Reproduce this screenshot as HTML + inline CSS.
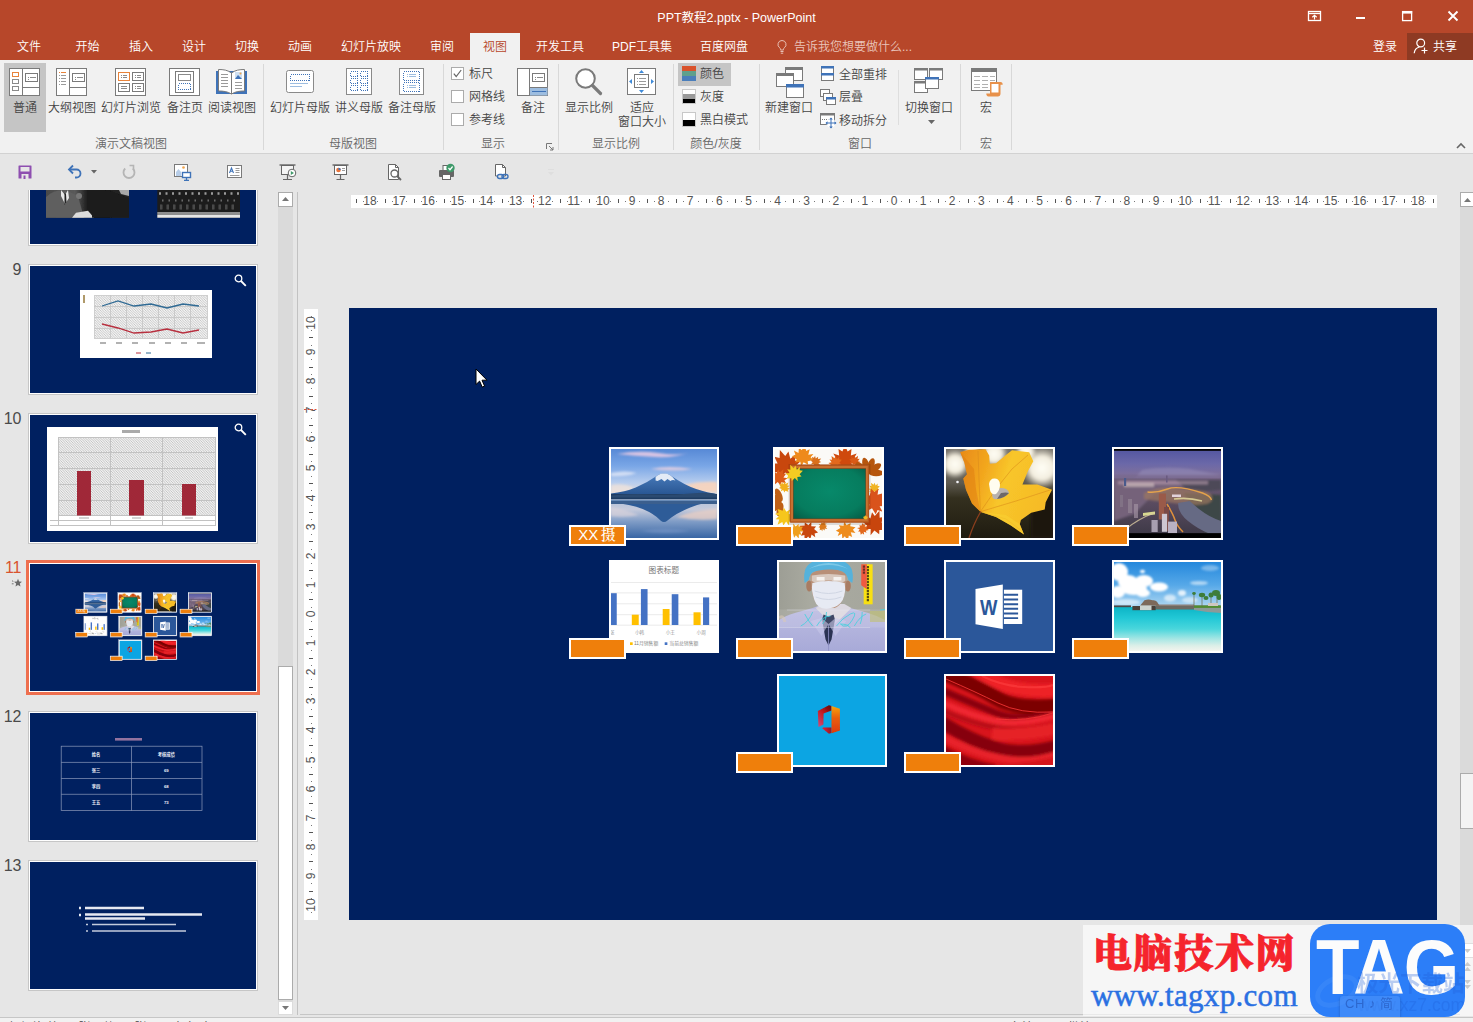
<!DOCTYPE html>
<html lang="zh-CN">
<head>
<meta charset="utf-8">
<title>PPT教程2.pptx - PowerPoint</title>
<style>
*{box-sizing:border-box;margin:0;padding:0}
html,body{width:1473px;height:1022px;overflow:hidden;background:#e6e6e6}
body{position:relative;font-family:"Liberation Sans","Noto Sans CJK SC",sans-serif;font-size:12px;color:#444;line-height:1;font-weight:350}
.abs{position:absolute}
#titlebar{position:absolute;left:0;top:0;width:1473px;height:60px;background:#b7472a}
#title{position:absolute;left:0;top:10px;width:1473px;text-align:center;color:#fff;font-size:12.500px;line-height:16px;font-weight:400}
.tab{position:absolute;top:38.500px;color:#fff;font-size:12px;line-height:16px;white-space:nowrap;transform:translateX(-50%)}
#tab-active{position:absolute;left:470px;top:33px;width:50px;height:28px;background:#f1f1f1}
.tab.act{color:#b7472a}
#ribbon{position:absolute;left:0;top:60px;width:1473px;height:94px;background:#f1f1f1;border-bottom:1px solid #d2d2d2}
.rb{position:absolute;top:101px;font-size:12px;line-height:14px;color:#444;white-space:nowrap;transform:translateX(-50%);text-align:center}
.rs{position:absolute;font-size:12px;line-height:14px;color:#444;white-space:nowrap}
.gl{position:absolute;top:137px;font-size:12px;line-height:14px;color:#666;white-space:nowrap;transform:translateX(-50%)}
.sep{position:absolute;top:64px;width:1px;height:86px;background:#d8d8d8}
.ico{position:absolute;overflow:visible}
#qat{position:absolute;left:0;top:155px;width:1473px;height:34px;background:#e6e6e6}

#hruler{position:absolute;left:351px;top:195px;width:1086px;height:13px;background:#fff;overflow:hidden}
.rn{position:absolute;top:-1px;font-size:12px;line-height:14px;color:#555;transform:translateX(-50%);font-family:"Liberation Sans",sans-serif}
#vruler{position:absolute;left:304px;top:309px;width:14px;height:611px;background:#fff;overflow:hidden}
.vn{position:absolute;left:7px;font-size:12px;line-height:14px;color:#555;transform:translate(-50%,-50%) rotate(-90deg);font-family:"Liberation Sans",sans-serif}
#slide{position:absolute;left:349px;top:308px;width:1088px;height:612px;background:#002060;overflow:hidden}
.pic{position:absolute;height:93px;border:2px solid #fff;background:#fff;overflow:hidden}
.pic svg{display:block}
.lab{position:absolute;width:57px;height:21px;border:2px solid #fff;background:#ef7f0b;color:#fff;font-size:15px;line-height:15.500px;text-align:center;white-space:nowrap;font-weight:500;font-family:"Liberation Sans","Noto Serif CJK SC",serif;word-spacing:-1.500px;text-indent:-1px}
#thumbs{position:absolute;left:0;top:190px;width:277px;height:826px;overflow:hidden}
#thumbs>*{margin-top:-190px}
.th{position:absolute;left:28px;width:230px;height:131px;border:1px solid #c6c6c6;background:#fff}
.ti{position:absolute;left:1px;top:1px;width:226px;height:127px;background:#002060;overflow:hidden}
.tn{position:absolute;left:0;width:21.500px;text-align:right;font-size:16px;line-height:16px;color:#4a4a4a;font-family:"Liberation Sans",sans-serif}
.tn.sel{color:#d9532f}
.mini{position:absolute;left:0;top:0;width:1088px;height:612px;transform:scale(.2077);transform-origin:0 0}
.mini .pic{outline:2.500px solid #fff}.mini .lab{outline:2px solid #fff}
</style>
</head>
<body>
<div id="titlebar">
<div id="title">PPT教程2.pptx - PowerPoint</div>
<svg class="ico" style="left:1306px;top:9px" width="18" height="14" viewBox="0 0 18 14"><rect x="2.5" y="2.5" width="12" height="9" fill="none" stroke="#fff" stroke-width="1.3"/><path d="M2.5 4.5h12" stroke="#fff" stroke-width="1.3"/><path d="M8.5 10.5V6.5M6.3 8.2l2.2-2 2.2 2" fill="none" stroke="#fff" stroke-width="1.2"/></svg>
<div class="abs" style="left:1356px;top:17px;width:9px;height:2px;background:#fff"></div>
<svg class="ico" style="left:1400px;top:9px" width="14" height="14" viewBox="0 0 14 14"><rect x="2.6" y="2.6" width="9" height="9" fill="none" stroke="#fff" stroke-width="1.3"/><rect x="2" y="2" width="10.2" height="2.6" fill="#fff"/></svg>
<svg class="ico" style="left:1446px;top:9px" width="14" height="14" viewBox="0 0 14 14"><path d="M2.5 2.5l9 9M11.500 2.500l-9 9" stroke="#fff" stroke-width="1.9"/></svg>
<div id="tab-active"></div>
<span class="tab" style="left:29px">文件</span>
<span class="tab" style="left:87.500px">开始</span>
<span class="tab" style="left:141px">插入</span>
<span class="tab" style="left:194px">设计</span>
<span class="tab" style="left:247px">切换</span>
<span class="tab" style="left:300px">动画</span>
<span class="tab" style="left:371px">幻灯片放映</span>
<span class="tab" style="left:442px">审阅</span>
<span class="tab act" style="left:495px">视图</span>
<span class="tab" style="left:560px">开发工具</span>
<span class="tab" style="left:642px">PDF工具集</span>
<span class="tab" style="left:724px">百度网盘</span>
<svg class="ico" style="left:776px;top:39px" width="12" height="16" viewBox="0 0 12 16"><path d="M6 1.500a4 4 0 0 0-2.300 7.300c.5.500.8 1 .8 1.700v.5h3v-.5c0-.7.300-1.200.8-1.700A4 4 0 0 0 6 1.500z" fill="none" stroke="#e8c1b6" stroke-width="1"/><path d="M4.500 12.500h3M4.800 14.200h2.400" stroke="#e8c1b6" stroke-width="1"/></svg>
<span class="tab" style="left:794px;transform:none;color:#e9c4ba">告诉我您想要做什么...</span>
<span class="tab" style="left:1385px">登录</span>
<div class="abs" style="left:1407px;top:33px;width:66px;height:27px;background:#8e3a23"></div>
<svg class="ico" style="left:1412px;top:37px" width="18" height="18" viewBox="0 0 18 18"><circle cx="8.700" cy="6" r="3.900" fill="none" stroke="#fff" stroke-width="1.200"/><path d="M2.200 16.300c.3-3.300 2.500-5.600 5.200-6.300" fill="none" stroke="#fff" stroke-width="1.200"/><path d="M12.500 10.500v6M9.500 13.500h6" stroke="#fff" stroke-width="1.200"/></svg>
<span class="tab" style="left:1445px">共享</span>
</div>

<div id="ribbon"></div>
<div class="abs" style="left:4px;top:63px;width:42px;height:69px;background:#c5c5c5"></div>
<!-- group 1 icons -->
<svg class="ico" style="left:9px;top:68px" width="32" height="28" viewBox="0 0 32 28"><rect x=".5" y=".5" width="30" height="27" fill="#fff" stroke="#7a7a7a"/><path d="M13.500 .5v27M13.500 19.500h17" stroke="#7a7a7a" fill="none"/><rect x="3.500" y="4.500" width="6" height="4" fill="#fff" stroke="#e8833a"/><rect x="3.500" y="11.500" width="6" height="4" fill="#fff" stroke="#8a8a8a"/><rect x="3.500" y="18.500" width="6" height="4" fill="#fff" stroke="#8a8a8a"/><rect x="16.500" y="5.500" width="12" height="8" fill="#fff" stroke="#7a7a7a"/><path d="M19 9.500h1M21 9.500h6M19 11.500h1" stroke="#8a8a8a"/></svg>
<svg class="ico" style="left:56px;top:68px" width="32" height="28" viewBox="0 0 32 28"><rect x=".5" y=".5" width="30" height="27" fill="#fff" stroke="#7a7a7a"/><path d="M13.500 .5v27M13.500 19.500h17" stroke="#7a7a7a" fill="none"/><path d="M3 4.500h1M5 4.500h5" stroke="#e8833a"/><path d="M3 7.500h1M5 7.500h5M3 10.500h1M5 10.500h5M3 13.500h1M5 13.500h5M3 16.500h1M5 16.500h5" stroke="#9a9a9a"/><rect x="16.500" y="5.500" width="12" height="8" fill="#fff" stroke="#7a7a7a"/><path d="M19 9.500h1M21 9.500h6M19 11.500h1" stroke="#8a8a8a"/></svg>
<svg class="ico" style="left:115px;top:68px" width="32" height="28" viewBox="0 0 32 28"><rect x=".5" y=".5" width="30" height="27" fill="#fff" stroke="#7a7a7a"/><rect x="3.500" y="4.500" width="11" height="8" fill="#fff" stroke="#e8833a"/><rect x="17.500" y="4.500" width="11" height="8" fill="#fff" stroke="#7a7a7a"/><rect x="3.500" y="15.500" width="11" height="8" fill="#fff" stroke="#7a7a7a"/><rect x="17.500" y="15.500" width="11" height="8" fill="#fff" stroke="#7a7a7a"/><path d="M6 7.500h1M8 7.500h4M6 9.500h1M8 9.500h4M20 7.500h1M22 7.500h4M20 9.500h1M22 9.500h4M6 18.500h6M6 20.500h6M20 18.500h1M22 18.500h4M20 20.500h1M22 20.500h4" stroke="#8a8a8a"/></svg>
<svg class="ico" style="left:169px;top:68px" width="32" height="28" viewBox="0 0 32 28"><rect x=".5" y=".5" width="30" height="27" fill="#fff" stroke="#7a7a7a"/><rect x="6.500" y="3.500" width="18" height="21" fill="#fff" stroke="#7a7a7a"/><rect x="9.500" y="6.500" width="12" height="6" fill="#fff" stroke="#8a8a8a"/><rect x="9.500" y="15.500" width="12" height="6" fill="none" stroke="#3f73b8" stroke-dasharray="1 1" shape-rendering="crispEdges"/></svg>
<svg class="ico" style="left:216px;top:68px" width="32" height="28" viewBox="0 0 32 28"><path d="M0 3h31v23H0z" fill="#3f73b8"/><path d="M2.500 1.500c5 0 9 .5 13 3.500v21c-4-2.500-8-3-13-3z" fill="#fff" stroke="#7a7a7a"/><path d="M28.500 1.500c-5 0-9 .5-13 3.500v21c4-2.500 8-3 13-3z" fill="#fff" stroke="#7a7a7a"/><path d="M5 6.500h7M5 9.500h7M5 12.500h7M5 15.500h7M5 18.500h7M19 14.500h7M19 17.500h7M19 20.500h7" stroke="#9a9a9a"/><rect x="19" y="4" width="7" height="7" fill="#cfe0f2"/><path d="M19 11l3-4 4 4z" fill="#3f73b8"/><circle cx="24.500" cy="5.500" r="1" fill="#f0a34a"/></svg>
<span class="rb" style="left:25px">普通</span>
<span class="rb" style="left:72px">大纲视图</span>
<span class="rb" style="left:131px">幻灯片浏览</span>
<span class="rb" style="left:185px">备注页</span>
<span class="rb" style="left:232px">阅读视图</span>
<span class="gl" style="left:131px">演示文稿视图</span>
<div class="sep" style="left:263px"></div>
<!-- group 2 -->
<svg class="ico" style="left:286px;top:70px" width="28" height="23" viewBox="0 0 28 23"><rect x=".5" y=".5" width="27" height="22" rx="2" fill="#fff" stroke="#8a8a8a"/><rect x="4.500" y="4.500" width="19" height="6" fill="none" stroke="#3f73b8" stroke-dasharray="1 1" shape-rendering="crispEdges"/><path d="M4 13.500h18M4 16.500h12" stroke="#9dbde0"/></svg>
<svg class="ico" style="left:346px;top:68px" width="27" height="27" viewBox="0 0 27 27"><rect x=".5" y=".5" width="25" height="26" fill="#fff" stroke="#8a8a8a"/><g fill="none" stroke="#3f73b8" stroke-dasharray="1 1" shape-rendering="crispEdges"><rect x="4.500" y="3.500" width="7" height="5"/><rect x="14.500" y="3.500" width="7" height="5"/><rect x="4.500" y="10.500" width="7" height="5"/><rect x="14.500" y="10.500" width="7" height="5"/><rect x="4.500" y="17.500" width="7" height="5"/><rect x="14.500" y="17.500" width="7" height="5"/></g></svg>
<svg class="ico" style="left:399px;top:68px" width="26" height="27" viewBox="0 0 26 27"><rect x=".5" y=".5" width="24" height="26" fill="#fff" stroke="#8a8a8a"/><g fill="none" stroke="#3f73b8" stroke-dasharray="1 1" shape-rendering="crispEdges"><rect x="4.500" y="3.500" width="16" height="9"/><rect x="4.500" y="14.500" width="16" height="9"/></g><path d="M8 6.500h1M10 6.500h7M8 8.500h1M10 8.500h7M8 17.500h1M10 17.500h7M8 19.500h1M10 19.500h7" stroke="#9dbde0"/></svg>
<span class="rb" style="left:300px">幻灯片母版</span>
<span class="rb" style="left:359px">讲义母版</span>
<span class="rb" style="left:412px">备注母版</span>
<span class="gl" style="left:353px">母版视图</span>
<div class="sep" style="left:443px"></div>
<!-- group 3 -->
<div class="abs" style="left:451px;top:67px;width:13px;height:13px;background:#fff;border:1px solid #ababab"></div>
<svg class="ico" style="left:451px;top:67px" width="13" height="13" viewBox="0 0 13 13"><path d="M2.800 6.700l2.400 2.800 5-6.500" fill="none" stroke="#666" stroke-width="1.200"/></svg>
<div class="abs" style="left:451px;top:90px;width:13px;height:13px;background:#fff;border:1px solid #ababab"></div>
<div class="abs" style="left:451px;top:113px;width:13px;height:13px;background:#fff;border:1px solid #ababab"></div>
<span class="rs" style="left:469px;top:67px">标尺</span>
<span class="rs" style="left:469px;top:90px">网格线</span>
<span class="rs" style="left:469px;top:113px">参考线</span>
<svg class="ico" style="left:517px;top:68px" width="32" height="28" viewBox="0 0 32 28"><rect x=".5" y=".5" width="30" height="27" fill="#fff" stroke="#7a7a7a"/><path d="M12.500 .5v27" stroke="#7a7a7a"/><rect x="13" y="19" width="17.500" height="8.500" fill="#9dbde0"/><path d="M12.500 19.500h18" stroke="#7a7a7a"/><path d="M15 23.500h14" stroke="#3f73b8"/><rect x="15.500" y="5.500" width="12" height="8" fill="#fff" stroke="#7a7a7a"/><path d="M18 9.500h1M20 9.500h6M18 11.500h1" stroke="#8a8a8a"/></svg>
<span class="rb" style="left:533px">备注</span>
<span class="gl" style="left:493px">显示</span>
<svg class="ico" style="left:546px;top:143px" width="8" height="8" viewBox="0 0 8 8"><path d="M.5 6V.5H6" fill="none" stroke="#777"/><path d="M3 3l4 4M7 4v3H4" fill="none" stroke="#777"/></svg>
<div class="sep" style="left:558px"></div>
<!-- group 4 -->
<svg class="ico" style="left:572px;top:66px" width="32" height="32" viewBox="0 0 32 32"><circle cx="13.500" cy="12.500" r="9.300" fill="#fff" stroke="#7a7a7a" stroke-width="2"/><path d="M20.500 19.500l8 8" stroke="#7a7a7a" stroke-width="3.200" stroke-linecap="round"/></svg>
<svg class="ico" style="left:627px;top:68px" width="30" height="27" viewBox="0 0 30 27"><rect x=".5" y=".5" width="28" height="26" fill="#fff" stroke="#7a7a7a"/><rect x="7.500" y="6.500" width="14" height="13" fill="#fff" stroke="#7a7a7a"/><path d="M10 10.500h1M12 10.500h7M10 13.500h1M12 13.500h7M10 16.500h1M12 16.500h7" stroke="#9a9a9a"/><path d="M14.500 2l2.500 3h-5zM14.500 25l2.500-3h-5zM2 13.500l3-2.500v5zM27 13.500l-3-2.500v5z" fill="#3f8ad8"/></svg>
<span class="rb" style="left:589px">显示比例</span>
<span class="rb" style="left:642px">适应<br>窗口大小</span>
<span class="gl" style="left:616px">显示比例</span>
<div class="sep" style="left:673px"></div>
<!-- group 5 -->
<div class="abs" style="left:678px;top:63px;width:53px;height:23px;background:#c5c5c5"></div>
<svg class="ico" style="left:682px;top:66px" width="14" height="15" viewBox="0 0 14 15"><rect width="14" height="5" fill="#d9532c"/><rect y="5" width="14" height="5" fill="#5fa08c"/><rect y="10" width="14" height="5" fill="#4a7ebb"/></svg>
<svg class="ico" style="left:682px;top:89px" width="14" height="15" viewBox="0 0 14 15"><rect width="14" height="5" fill="#fff"/><rect y="5" width="14" height="5" fill="#9a9a9a"/><rect y="10" width="14" height="5" fill="#000"/><rect x=".5" y=".5" width="13" height="14" fill="none" stroke="#c8c8c8"/></svg>
<svg class="ico" style="left:682px;top:112px" width="14" height="15" viewBox="0 0 14 15"><rect width="14" height="8" fill="#fff"/><rect y="8" width="14" height="7" fill="#000"/><rect x=".5" y=".5" width="13" height="14" fill="none" stroke="#c8c8c8"/></svg>
<span class="rs" style="left:700px;top:67px">颜色</span>
<span class="rs" style="left:700px;top:90px">灰度</span>
<span class="rs" style="left:700px;top:113px">黑白模式</span>
<span class="gl" style="left:716px">颜色/灰度</span>
<div class="sep" style="left:759px"></div>
<!-- group 6 -->
<svg class="ico" style="left:776px;top:67px" width="28" height="31" viewBox="0 0 28 31"><rect x="9.500" y=".5" width="17" height="13" fill="#fff" stroke="#7a7a7a"/><rect x="9" y="0" width="18" height="3" fill="#7a7a7a"/><rect x=".5" y="6.500" width="17" height="13" fill="#fff" stroke="#7a7a7a"/><rect x="0" y="6" width="18" height="3" fill="#7a7a7a"/><rect x="10.500" y="17.500" width="17" height="13" fill="#fff" stroke="#7a7a7a"/><rect x="10" y="17" width="18" height="3.500" fill="#3f73b8"/></svg>
<span class="rb" style="left:789px">新建窗口</span>
<svg class="ico" style="left:821px;top:66px" width="14" height="15" viewBox="0 0 14 15"><rect x=".5" y=".5" width="12" height="14" fill="#fff" stroke="#7a7a7a"/><rect x="0" y="0" width="13" height="2.500" fill="#3f73b8"/><rect x="0" y="7" width="13" height="2.500" fill="#3f73b8"/></svg>
<svg class="ico" style="left:820px;top:89px" width="17" height="16" viewBox="0 0 17 16"><rect x=".5" y=".5" width="9" height="7" fill="#fff" stroke="#7a7a7a"/><rect x="3.500" y="4.500" width="9" height="7" fill="#fff" stroke="#7a7a7a"/><rect x="6.500" y="8.500" width="9" height="7" fill="#fff" stroke="#7a7a7a"/><rect x="6" y="8" width="10" height="2.500" fill="#3f73b8"/></svg>
<svg class="ico" style="left:820px;top:113px" width="17" height="16" viewBox="0 0 17 16"><rect x=".5" y=".5" width="14" height="11" fill="#fff" stroke="#7a7a7a"/><rect x="0" y="0" width="15" height="2.500" fill="#7a7a7a"/><path d="M2 6.500h8" stroke="#7a7a7a" stroke-dasharray="1 1" shape-rendering="crispEdges"/><circle cx="11" cy="10" r="4.500" fill="#fff"/><path d="M11 5v10M6 10h10" stroke="#3f73b8" stroke-width="1"/><path d="M11 4.500l1.800 2h-3.600zM11 15.500l1.800-2h-3.600zM5.500 10l2-1.800v3.600zM16.500 10l-2-1.800v3.600z" fill="#3f73b8"/></svg>
<span class="rs" style="left:839px;top:68px">全部重排</span>
<span class="rs" style="left:839px;top:90px">层叠</span>
<span class="rs" style="left:839px;top:114px">移动拆分</span>
<div class="abs" style="left:898px;top:70px;width:1px;height:55px;background:#dedede"></div>
<svg class="ico" style="left:914px;top:68px" width="30" height="26" viewBox="0 0 30 26"><rect x=".5" y=".5" width="13" height="11" fill="#fff" stroke="#7a7a7a"/><rect x="0" y="0" width="14" height="2.500" fill="#7a7a7a"/><rect x="15.500" y=".5" width="13" height="11" fill="#fff" stroke="#7a7a7a"/><rect x="15" y="0" width="14" height="2.500" fill="#7a7a7a"/><rect x=".5" y="13.500" width="13" height="11" fill="#fff" stroke="#7a7a7a"/><rect x="0" y="13" width="14" height="2.500" fill="#7a7a7a"/><rect x="11.500" y="9.500" width="13" height="11" fill="#fff" stroke="#7a7a7a"/><rect x="11" y="9" width="14" height="2.500" fill="#3f73b8"/></svg>
<span class="rb" style="left:929px">切换窗口</span>
<svg class="ico" style="left:928px;top:120px" width="7" height="4" viewBox="0 0 7 4"><path d="M0 0h7L3.500 4z" fill="#666"/></svg>
<span class="gl" style="left:860px">窗口</span>
<div class="sep" style="left:960px"></div>
<!-- group 7 -->
<svg class="ico" style="left:971px;top:68px" width="32" height="29" viewBox="0 0 32 29"><rect x=".5" y=".5" width="25" height="22" fill="#fff" stroke="#7a7a7a"/><rect x="0" y="0" width="26" height="4" fill="#7a7a7a"/><path d="M3 8.500h6M11 8.500h6M19 8.500h5M3 12.500h6M11 12.500h6M19 12.500h5M3 16.500h6M11 16.500h6M3 19.500h6M11 19.500h6" stroke="#b0b0b0"/><path d="M19 14h10.500c1.500 0 2.200 1 2.200 2.800h-2.200v9c0 1.600-1 2.600-2.600 2.600h-9.400c-1.500 0-2.200-1.300-2.200-2.900h3.700z" fill="#e8914a"/><path d="M20.500 16h7v8.500h-7z" fill="#fff"/></svg>
<span class="rb" style="left:986px">宏</span>
<span class="gl" style="left:986px">宏</span>
<div class="sep" style="left:1011px"></div>
<svg class="ico" style="left:1456px;top:142px" width="10" height="7" viewBox="0 0 10 7"><path d="M1 6l4-4 4 4" fill="none" stroke="#666" stroke-width="1.600"/></svg>

<div id="qat"></div>
<svg class="ico" style="left:18px;top:165px" width="14" height="14" viewBox="0 0 14 14"><path d="M1 .5h12a.5.5 0 0 1 .5.5v12a.5.5 0 0 1-.5.500H1a.5.5 0 0 1-.5-.5V1A.5.5 0 0 1 1 .5z" fill="#8e4fb0"/><rect x="2.500" y="2" width="9" height="4.500" fill="#e6e6e6"/><rect x="3.500" y="9" width="7" height="5" fill="#e6e6e6"/><rect x="5.500" y="10.500" width="2" height="3.500" fill="#8e4fb0"/></svg>
<svg class="ico" style="left:67px;top:164px" width="16" height="16" viewBox="0 0 16 16"><path d="M2 5.500h7.500a4 4 0 0 1 0 8H8" fill="none" stroke="#3f73b8" stroke-width="1.800"/><path d="M6 1.500L2 5.500l4 4" fill="none" stroke="#3f73b8" stroke-width="1.800"/></svg>
<svg class="ico" style="left:91px;top:170px" width="6" height="4" viewBox="0 0 6 4"><path d="M0 0h6L3 3.500z" fill="#666"/></svg>
<svg class="ico" style="left:121px;top:164px" width="16" height="16" viewBox="0 0 16 16"><path d="M11.800 4.500A5.500 5.500 0 1 1 4.200 4.500" fill="none" stroke="#b5b5b5" stroke-width="1.800"/><path d="M8.500 1.500h4v4" fill="none" stroke="#b5b5b5" stroke-width="1.600"/></svg>
<svg class="ico" style="left:174px;top:164px" width="17" height="17" viewBox="0 0 17 17"><rect x=".5" y=".5" width="13" height="12" fill="#fff" stroke="#7a7a7a"/><circle cx="9.500" cy="3.500" r="1.300" fill="#f0a34a"/><path d="M2 12V8l2.500-3 2.500 3v4z" fill="#b7cde8"/><rect x="8.500" y="8.500" width="8" height="5" fill="#fff" stroke="#3f73b8" stroke-width="1.400"/><path d="M12.500 14v2M10 16.300h5" stroke="#3f73b8" stroke-width="1.300"/></svg>
<svg class="ico" style="left:227px;top:165px" width="16" height="14" viewBox="0 0 16 14"><rect x=".5" y=".5" width="14" height="12" fill="#fff" stroke="#7a7a7a"/><path d="M2.500 8l2-5 2 5M3.300 6.300h2.400" fill="none" stroke="#3f73b8" stroke-width="1.100"/><path d="M8.500 3.500h4M8.500 5.500h4M8.500 7.500h4M3 10.500h9.500" stroke="#9a9a9a"/></svg>
<svg class="ico" style="left:279px;top:164px" width="19" height="17" viewBox="0 0 19 17"><path d="M.5 1h16" stroke="#666" stroke-width="1.400"/><rect x="2.500" y="1.500" width="12" height="9" fill="#f5f5f5" stroke="#666"/><path d="M8.500 11v4M4 15.500h9" stroke="#666" stroke-width="1.200"/><circle cx="13" cy="9" r="3.800" fill="#fff" stroke="#666"/><path d="M11.800 7l3.200 2-3.200 2z" fill="#3f9a6a"/></svg>
<svg class="ico" style="left:332px;top:164px" width="18" height="17" viewBox="0 0 18 17"><path d="M.5 1h16" stroke="#666" stroke-width="1.400"/><rect x="2.500" y="1.500" width="12" height="9" fill="#fff" stroke="#666"/><path d="M8.500 11v4M4.500 15.500h8" stroke="#666" stroke-width="1.200"/><circle cx="6.500" cy="6" r="2.300" fill="#e8733a"/><path d="M6.500 6V3.700A2.300 2.300 0 0 1 8.800 6z" fill="#3f73b8"/><path d="M10 4.500h3M10 6.500h3" stroke="#9a9a9a"/></svg>
<svg class="ico" style="left:387px;top:164px" width="17" height="17" viewBox="0 0 17 17"><path d="M1.500 .5h7l3 3v12h-10z" fill="#fff" stroke="#666"/><path d="M8.500 .5v3h3" fill="none" stroke="#666"/><circle cx="7.500" cy="9.500" r="3.500" fill="#fff" stroke="#666" stroke-width="1.300"/><path d="M10 12l4 4" stroke="#666" stroke-width="1.800"/></svg>
<svg class="ico" style="left:438px;top:163px" width="18" height="18" viewBox="0 0 18 18"><rect x="5" y="2.500" width="7" height="5" fill="#fff" stroke="#666"/><rect x="1" y="7" width="15" height="7" rx="1" fill="#666"/><rect x="4.500" y="11.500" width="8" height="5" fill="#fff" stroke="#666"/><circle cx="12.500" cy="5" r="4.200" fill="#3f9a6a"/><path d="M10.500 5l1.500 1.700 2.600-3.200" fill="none" stroke="#fff" stroke-width="1.200"/></svg>
<svg class="ico" style="left:494px;top:164px" width="16" height="18" viewBox="0 0 16 18"><path d="M1.500 .5h7l3 3v8.500h-10z" fill="#fff" stroke="#666"/><path d="M8.500 .5v3h3" fill="none" stroke="#666"/><rect x="3.500" y="10.500" width="6" height="4" rx="2" fill="#e6e6e6" stroke="#3f73b8" stroke-width="1.400"/><rect x="8" y="10.500" width="6" height="4" rx="2" fill="none" stroke="#3f73b8" stroke-width="1.400"/></svg>
<svg class="ico" style="left:547px;top:169px" width="8" height="8" viewBox="0 0 8 8"><path d="M1 .5h6" stroke="#dedede"/><path d="M1 3h6L4 6.500z" fill="#dedede"/></svg>

<div id="thumbs">
<div class="th" style="top:115px"><div class="ti"><svg class="ico" style="left:16px;top:0" width="200" height="127" viewBox="0 0 200 127"><defs><linearGradient id="bw1" x1="0" y1="0" x2="1" y2="0"><stop offset="0" stop-color="#4a4a4a"/><stop offset=".35" stop-color="#5a5a5a"/><stop offset=".5" stop-color="#1c1c1c"/><stop offset="1" stop-color="#262626"/></linearGradient><filter id="bl8" x="-5%" y="-5%" width="110%" height="110%"><feGaussianBlur stdDeviation=".5"/></filter></defs>
<g filter="url(#bl8)"><rect x="0" y="60" width="83" height="40.700" fill="url(#bw1)"/><path d="M0 100.700V80q8-8 20-7l12 6 6 21.700z" fill="#5e5e5e"/><path d="M15 73l4 5 3-5 1 8-4 6-4-8z" fill="#e8e8e8"/><path d="M18.500 76l1.500 1 .5 8-2 3z" fill="#222"/><circle cx="20" cy="67" r="6" fill="#8a8a8a"/><circle cx="33" cy="79" r="3" fill="#777"/><path d="M26 100.700l4-5 12-2 6 7z" fill="#dcdcdc"/><path d="M46 100.700V82q6-10 16-9l21 8v19.700z" fill="#1a1a1a"/><circle cx="66" cy="67" r="6" fill="#777"/><path d="M73 73h10v6l-8-2z" fill="#a8a8a8"/>
<rect x="111.300" y="60" width="82.700" height="40.700" fill="#1e1e1e"/><path d="M113 76.500h80" stroke="#9a9a9a" stroke-width="2.600" stroke-dasharray="2 4.500"/><path d="M116 83.500h76" stroke="#6a6a6a" stroke-width="2" stroke-dasharray="1.500 5"/><path d="M114 90h78" stroke="#4a4a4a" stroke-width="5" stroke-dasharray="2.500 4"/><path d="M111.300 95h82.700v3h-82.700z" fill="#8e8e8e"/><path d="M111.300 98h82.700v2.700h-82.700z" fill="#e6e6e6"/></g></svg></div></div>
<div class="th" style="top:264px"><div class="ti"><svg class="ico" style="left:50px;top:24px" width="132" height="68" viewBox="0 0 132 68"><defs><pattern id="h9" width="2.500" height="2.500" patternUnits="userSpaceOnUse"><rect width="2.500" height="2.500" fill="#f4f4f4"/><path d="M-.5 -.5l3.500 3.500" stroke="#b4b4b4" stroke-width=".7"/></pattern></defs><rect width="132" height="68" fill="#fff"/><rect x="14.500" y="5.500" width="113" height="43" fill="url(#h9)" stroke="#cfcfcf"/><path d="M14 16.500h113M14 27.500h113M14 38.500h113M30.500 5v43M46.500 5v43M62.500 5v43M78.500 5v43M94.500 5v43M110.500 5v43" stroke="#c4c4c4" stroke-width=".8"/><path d="M22 16l16-5 16 5 17-2 16 4 16-4 16 2" fill="none" stroke="#2f6a94" stroke-width="1.300"/><path d="M22 34l16 4 16 5 17-1 16-3 16 4 16-3" fill="none" stroke="#b8303f" stroke-width="1.300"/><path d="M20 53h6M36 53h6M52 53h6M69 53h6M85 53h6M101 53h6M117 53h8" stroke="#999" stroke-width="1.500"/><path d="M56 63h5" stroke="#b8303f" stroke-width="1"/><path d="M66 63h5" stroke="#2f6a94" stroke-width="1"/><path d="M4 5v8" stroke="#b09a6a" stroke-width="2"/></svg></div></div><span class="tn" style="top:262px">9</span><svg class="ico" style="left:234px;top:274px" width="13" height="13" viewBox="0 0 13 13"><circle cx="4.500" cy="4.500" r="3.300" fill="none" stroke="#fff" stroke-width="1.300"/><path d="M7 7l4.800 4.800" stroke="#fff" stroke-width="1.800"/></svg>
<div class="th" style="top:413px"><div class="ti"><svg class="ico" style="left:17px;top:12px" width="171" height="104" viewBox="0 0 171 104"><defs><pattern id="h10" width="2.500" height="2.500" patternUnits="userSpaceOnUse"><rect width="2.500" height="2.500" fill="#f2f2f2"/><path d="M-.5 -.5l3.500 3.500" stroke="#b0b0b0" stroke-width=".7"/></pattern></defs><rect width="171" height="104" fill="#fff"/><rect x="11" y="10" width="158" height="78" fill="url(#h10)"/><path d="M11 10.500h158M11 25.500h158M11 41.500h158M11 57.500h158M11 73.500h158M11 88.500h158M11.500 10v88M63.500 10v88M115.500 10v88M168.500 10v88M3 93.500h166M3 98.500h166" stroke="#c2c2c2" stroke-width="1"/><rect x="30" y="44" width="14" height="44.500" fill="#a02838"/><rect x="82" y="53" width="15" height="35.500" fill="#a02838"/><rect x="135" y="57" width="14" height="31.500" fill="#a02838"/><path d="M75 4.500h18" stroke="#aaa" stroke-width="3"/><path d="M32 91h10M85 91h9M138 91h8" stroke="#aaa" stroke-width="1.200"/></svg></div></div><span class="tn" style="top:411px">10</span><svg class="ico" style="left:234px;top:423px" width="13" height="13" viewBox="0 0 13 13"><circle cx="4.500" cy="4.500" r="3.300" fill="none" stroke="#fff" stroke-width="1.300"/><path d="M7 7l4.800 4.800" stroke="#fff" stroke-width="1.800"/></svg>
<div class="abs" style="left:26px;top:560px;width:234px;height:135px;background:#ee6f4f"></div><div class="th" style="top:562px;border-color:#ee6f4f"><div class="ti"><div class="mini"><div class="pic" style="left:260px;top:139px;width:110px"><svg width="106" height="89" viewBox="0 0 107 89" preserveAspectRatio="none"><defs><linearGradient id="msky1" x1="0" y1="0" x2="0" y2="1"><stop offset="0" stop-color="#5789d6"/><stop offset=".35" stop-color="#79a6e6"/><stop offset=".7" stop-color="#b7cdee"/><stop offset="1" stop-color="#f1e2d6"/></linearGradient>
<linearGradient id="mwat1" x1="0" y1="0" x2="0" y2="1"><stop offset="0" stop-color="#aebfd8"/><stop offset=".3" stop-color="#c6cbdc"/><stop offset=".6" stop-color="#7f9cc6"/><stop offset="1" stop-color="#3966a4"/></linearGradient>
<linearGradient id="mmt1" x1="0" y1="0" x2="0" y2="1"><stop offset="0" stop-color="#4a7cbc"/><stop offset="1" stop-color="#23508c"/></linearGradient>
<filter id="mb1" x="-10%" y="-10%" width="120%" height="120%"><feGaussianBlur stdDeviation="1.200"/></filter><filter id="mb1s" x="-10%" y="-10%" width="120%" height="120%"><feGaussianBlur stdDeviation=".5"/></filter></defs>
<rect width="107" height="48" fill="url(#msky1)"/>
<g filter="url(#mb1)"><path d="M6 5q22-4 42-1t30 0q-14 5-34 4T6 5z" fill="#e3c9e4" opacity=".9"/><path d="M40 20q18-4 42 0q-18 3-42 0z" fill="#ecd2e0" opacity=".8"/><path d="M0 24q14-3 26 0-12 4-26 3z" fill="#dfe6f6" opacity=".8"/><path d="M74 36q16-4 33-3v10H74z" fill="#f8d4bc" opacity=".9"/><path d="M0 36q12-2 22 2v6H0z" fill="#f3e4da" opacity=".7"/></g>
<path d="M0 44.500Q14 43 25 38.500T46 27q3-2.500 6-2.500h3q3 0 6 2.500Q74 36 86 40t21 5v4H0z" fill="url(#mmt1)"/>
<path d="M45 28q4-3.500 7-3.500h3q3 0 7 3.500l3 3.500q-3-1-5 .500l-3-2-3 2.500-3-2.500-4 2-2-.5z" fill="#e4ebf6" filter="url(#mb1s)"/>
<rect y="48" width="107" height="41" fill="url(#mwat1)"/>
<path d="M0 45h107v5.500H0z" fill="#1e3c62"/>
<path d="M0 46.500q20-2 40-1t40-1 27 1v3H0z" fill="#2b4a70"/>
<path d="M0 50.500h107v1.800H0z" fill="#a9bcd8"/>
<g filter="url(#mb1s)"><path d="M0 53.500Q20 55 32 60t18 11.500q3.500 3 7 0Q66 64 80 58.500t27-6v-1H0z" fill="#2e5c98"/><path d="M0 52h107v3H0z" fill="#3a5f8e"/></g>
<g filter="url(#mb1)"><path d="M66 68q18-7 41-8v10q-22 2-41-2z" fill="#ecd0c4" opacity=".75"/><path d="M0 58q14 2 28 8-14 3-28 1z" fill="#d9d3dc" opacity=".7"/><path d="M30 82q25-4 50 0-25 4-50 0z" fill="#7f9ccc" opacity=".5"/></g></svg></div>
<div class="pic" style="left:424px;top:139px;width:111px"><svg width="107" height="89" viewBox="0 0 107 89" preserveAspectRatio="none"><defs><radialGradient id="mgb2" cx=".5" cy=".45" r=".7"><stop offset="0" stop-color="#07896a"/><stop offset=".7" stop-color="#067c5e"/><stop offset="1" stop-color="#055f48"/></radialGradient><filter id="mb2" x="-10%" y="-10%" width="120%" height="120%"><feGaussianBlur stdDeviation=".35"/></filter></defs>
<rect width="107" height="89" fill="#fbfaf7"/>
<g filter="url(#mb2)"><path d="M0-10 2-5 5-7 4.500-2 9-3.500 7 0 10 2 5 4 6 7 1.500 5.500 0 10-1.500 5.500-6 7-5 4-10 2-7 0-9-3.500-4.500-2-5-7-2-5z" transform="translate(10.0 15.0) rotate(-20) scale(1.50)" fill="#c8460e"/><path d="M0-10 2-5 5-7 4.500-2 9-3.500 7 0 10 2 5 4 6 7 1.500 5.500 0 10-1.500 5.500-6 7-5 4-10 2-7 0-9-3.500-4.500-2-5-7-2-5z" transform="translate(4.0 28.0) rotate(30) scale(0.90)" fill="#dc5a16"/><path d="M0-10 2-5 5-7 4.500-2 9-3.500 7 0 10 2 5 4 6 7 1.500 5.500 0 10-1.500 5.500-6 7-5 4-10 2-7 0-9-3.500-4.500-2-5-7-2-5z" transform="translate(28.0 7.0) rotate(10) scale(1.10)" fill="#ee8a1a"/><path d="M0-10 2-5 5-7 4.500-2 9-3.500 7 0 10 2 5 4 6 7 1.500 5.500 0 10-1.500 5.500-6 7-5 4-10 2-7 0-9-3.500-4.500-2-5-7-2-5z" transform="translate(41.0 12.5) rotate(60) scale(0.60)" fill="#d9701c"/><path d="M0-10 2-5 5-7 4.500-2 9-3.500 7 0 10 2 5 4 6 7 1.500 5.500 0 10-1.500 5.500-6 7-5 4-10 2-7 0-9-3.500-4.500-2-5-7-2-5z" transform="translate(70.0 9.0) rotate(0) scale(1.30)" fill="#cf4a10"/><path d="M0-10 2-5 5-7 4.500-2 9-3.500 7 0 10 2 5 4 6 7 1.500 5.500 0 10-1.500 5.500-6 7-5 4-10 2-7 0-9-3.500-4.500-2-5-7-2-5z" transform="translate(60.0 13.0) rotate(-30) scale(0.70)" fill="#e2671a"/><path d="M0-10 2-5 5-7 4.500-2 9-3.500 7 0 10 2 5 4 6 7 1.500 5.500 0 10-1.500 5.500-6 7-5 4-10 2-7 0-9-3.500-4.500-2-5-7-2-5z" transform="translate(80.0 12.0) rotate(30) scale(0.60)" fill="#d95a14"/><g transform="translate(93.0 24.0) rotate(20)" fill="#b6560f"><ellipse cx="0" cy="-8.2" rx="3.3" ry="7.5" transform="rotate(-70)"/><ellipse cx="0" cy="-8.2" rx="3.3" ry="7.5" transform="rotate(-35)"/><ellipse cx="0" cy="-8.2" rx="3.3" ry="7.5" transform="rotate(0)"/><ellipse cx="0" cy="-8.2" rx="3.3" ry="7.5" transform="rotate(35)"/><ellipse cx="0" cy="-8.2" rx="3.3" ry="7.5" transform="rotate(70)"/></g><g transform="translate(7.0 53.0) rotate(-95)" fill="#bf6114"><ellipse cx="0" cy="-7.7" rx="3.1" ry="7.0" transform="rotate(-70)"/><ellipse cx="0" cy="-7.7" rx="3.1" ry="7.0" transform="rotate(-35)"/><ellipse cx="0" cy="-7.7" rx="3.1" ry="7.0" transform="rotate(0)"/><ellipse cx="0" cy="-7.7" rx="3.1" ry="7.0" transform="rotate(35)"/><ellipse cx="0" cy="-7.7" rx="3.1" ry="7.0" transform="rotate(70)"/></g><path d="M0-10 2-5 5-7 4.500-2 9-3.500 7 0 10 2 5 4 6 7 1.500 5.500 0 10-1.500 5.500-6 7-5 4-10 2-7 0-9-3.500-4.500-2-5-7-2-5z" transform="translate(9.5 38.0) rotate(40) scale(0.60)" fill="#f2b01c"/><path d="M0-10 2-5 5-7 4.500-2 9-3.500 7 0 10 2 5 4 6 7 1.500 5.500 0 10-1.500 5.500-6 7-5 4-10 2-7 0-9-3.500-4.500-2-5-7-2-5z" transform="translate(99.0 39.0) rotate(-30) scale(0.60)" fill="#f0b424"/><path d="M0-10 2-5 5-7 4.500-2 9-3.500 7 0 10 2 5 4 6 7 1.500 5.500 0 10-1.500 5.500-6 7-5 4-10 2-7 0-9-3.500-4.500-2-5-7-2-5z" transform="translate(101.0 52.0) rotate(80) scale(1.30)" fill="#d9531a"/><path d="M0-10 2-5 5-7 4.500-2 9-3.500 7 0 10 2 5 4 6 7 1.500 5.500 0 10-1.500 5.500-6 7-5 4-10 2-7 0-9-3.500-4.500-2-5-7-2-5z" transform="translate(100.0 74.0) rotate(20) scale(1.30)" fill="#c8440e"/><path d="M0-10 2-5 5-7 4.500-2 9-3.500 7 0 10 2 5 4 6 7 1.500 5.500 0 10-1.500 5.500-6 7-5 4-10 2-7 0-9-3.500-4.500-2-5-7-2-5z" transform="translate(71.0 82.0) rotate(170) scale(1.00)" fill="#ee8c1c"/><path d="M0-10 2-5 5-7 4.500-2 9-3.500 7 0 10 2 5 4 6 7 1.500 5.500 0 10-1.500 5.500-6 7-5 4-10 2-7 0-9-3.500-4.500-2-5-7-2-5z" transform="translate(48.0 77.5) rotate(120) scale(0.50)" fill="#dd7a1a"/><path d="M0-10 2-5 5-7 4.500-2 9-3.500 7 0 10 2 5 4 6 7 1.500 5.500 0 10-1.500 5.500-6 7-5 4-10 2-7 0-9-3.500-4.500-2-5-7-2-5z" transform="translate(33.0 82.0) rotate(200) scale(1.00)" fill="#c8460e"/><path d="M0-10 2-5 5-7 4.500-2 9-3.500 7 0 10 2 5 4 6 7 1.500 5.500 0 10-1.500 5.500-6 7-5 4-10 2-7 0-9-3.500-4.500-2-5-7-2-5z" transform="translate(21.0 82.0) rotate(160) scale(0.80)" fill="#f0a01c"/><path d="M0-10 2-5 5-7 4.500-2 9-3.500 7 0 10 2 5 4 6 7 1.500 5.500 0 10-1.500 5.500-6 7-5 4-10 2-7 0-9-3.500-4.500-2-5-7-2-5z" transform="translate(9.0 68.0) rotate(-140) scale(1.00)" fill="#f6c61c"/><path d="M0-10 2-5 5-7 4.500-2 9-3.500 7 0 10 2 5 4 6 7 1.500 5.500 0 10-1.500 5.500-6 7-5 4-10 2-7 0-9-3.500-4.500-2-5-7-2-5z" transform="translate(88.0 80.0) rotate(100) scale(0.60)" fill="#e2671a"/></g>
<rect x="13.500" y="15" width="82" height="61" fill="#000" opacity=".12" filter="url(#mb2)"/>
<rect x="14.800" y="15.600" width="79.200" height="58.200" rx="1" fill="#b4561c"/>
<rect x="16" y="17" width="76.800" height="55.400" fill="#c97030"/>
<rect x="18" y="19.300" width="73" height="50.800" fill="#8a3c10"/>
<rect x="18.500" y="19.800" width="72" height="49.800" fill="url(#mgb2)"/>
<g filter="url(#mb2)"><path d="M0-10 2-5 5-7 4.500-2 9-3.500 7 0 10 2 5 4 6 7 1.500 5.500 0 10-1.500 5.500-6 7-5 4-10 2-7 0-9-3.500-4.500-2-5-7-2-5z" transform="translate(19.0 24.0) rotate(-25) scale(0.90)" fill="#f3cc22"/><path d="M0-10 2-5 5-7 4.500-2 9-3.500 7 0 10 2 5 4 6 7 1.500 5.500 0 10-1.500 5.500-6 7-5 4-10 2-7 0-9-3.500-4.500-2-5-7-2-5z" transform="translate(90.5 68.5) rotate(0) scale(0.26)" fill="#f2b824"/></g></svg></div>
<div class="pic" style="left:595px;top:139px;width:111px"><svg width="107" height="89" viewBox="0 0 107 89" preserveAspectRatio="none"><defs><radialGradient id="mbk3"><stop offset="0" stop-color="#fffef6"/><stop offset=".55" stop-color="#f3eedf"/><stop offset="1" stop-color="#d9d3c2" stop-opacity="0"/></radialGradient>
<linearGradient id="mbg3" x1="0" y1="0" x2="0" y2="1"><stop offset="0" stop-color="#77736c"/><stop offset=".38" stop-color="#5e5a50"/><stop offset=".55" stop-color="#34301f"/><stop offset="1" stop-color="#1f1b10"/></linearGradient>
<linearGradient id="mlf3" x1="0" y1="0" x2="1" y2=".3"><stop offset="0" stop-color="#e88a18"/><stop offset=".3" stop-color="#f2a61e"/><stop offset=".55" stop-color="#f8c62a"/><stop offset="1" stop-color="#f6bb26"/></linearGradient>
<filter id="mb3" x="-20%" y="-20%" width="140%" height="140%"><feGaussianBlur stdDeviation="1.600"/></filter><filter id="mb3s" x="-10%" y="-10%" width="120%" height="120%"><feGaussianBlur stdDeviation=".4"/></filter></defs>
<rect width="107" height="89" fill="url(#mbg3)"/>
<g filter="url(#mb3)"><circle cx="9" cy="15" r="15" fill="url(#mbk3)"/><circle cx="48" cy="5" r="14" fill="url(#mbk3)"/><circle cx="96" cy="19" r="21" fill="url(#mbk3)"/><circle cx="80" cy="3" r="11" fill="url(#mbk3)"/><circle cx="26" cy="2" r="8" fill="url(#mbk3)"/><rect x="85" y="42" width="22" height="47" fill="#1e190f"/></g>
<g filter="url(#mb3s)"><path d="M14.200 3.100 23 .7 39.600 .2 43.200 6.500 43.800 14.800 50 14.300 59.300 6.500 66 1.300 83.200 3.300 87.300 12.200 82 22 76.400 35.600 91.400 35.600 106 40.800 99.700 53.300 98.700 60.600 85.200 63.800 74.900 71 73.800 75.200 78 85.600 64.500 76.300 50 68 34.400 62.700 26 54.400 20 40.800 17.300 29.400 21 25.200 18.400 13.800z" fill="url(#mlf3)"/>
<path d="M34.400 62.700 50 40 66 20 82 6M34.400 62.700 33 30 32 2M34.400 62.700 70 52 104 41M34.400 62.700 60 70 76 82" fill="none" stroke="#d98a1a" stroke-width=".7" opacity=".8"/>
<path d="M14.200 3.100 18.400 13.800 21 25.200 17.300 29.400 20 40.800 26 54.400 34.400 62.700 30 40 28 20z" fill="#e07f16" opacity=".55"/>
<path d="M34.400 62.700 50 68 64.500 76.300 78 85.600 73.800 75.200 60 66z" fill="#f9cf30" opacity=".7"/>
<path d="M34.800 62.500Q28 74 23 89" fill="none" stroke="#8a3e1c" stroke-width="1.300"/>
<path d="M47 40q-2 8 1 10 8 1 15-6-1-5-8-5z" fill="#b8b2ae"/><path d="M55 44q5-1 8 0-4 5-12 6z" fill="#6e6868"/>
<path d="M43 35q1-6 6-5.500t5 6.500q0 5-4 9-5 1-6-4z" fill="#fffdf0"/></g>
<circle cx="11.500" cy="33" r="1.300" fill="#f4f4f8" filter="url(#mb3s)"/></svg></div>
<div class="pic" style="left:763px;top:139px;width:111px"><svg width="107" height="89" viewBox="0 0 107 89" preserveAspectRatio="none"><defs><linearGradient id="msky4" x1="0" y1="0" x2="0" y2="1"><stop offset="0" stop-color="#5558a2"/><stop offset=".45" stop-color="#6b68a8"/><stop offset=".8" stop-color="#7d6f9c"/><stop offset="1" stop-color="#6f5f82"/></linearGradient>
<linearGradient id="mct4" x1="0" y1="0" x2="0" y2="1"><stop offset="0" stop-color="#6e5d7c"/><stop offset=".4" stop-color="#5c4d62"/><stop offset="1" stop-color="#3f3a48"/></linearGradient>
<filter id="mb4" x="-20%" y="-20%" width="140%" height="140%"><feGaussianBlur stdDeviation="1.100"/></filter><filter id="mb4s" x="-10%" y="-10%" width="120%" height="120%"><feGaussianBlur stdDeviation=".45"/></filter></defs>
<rect width="107" height="89" fill="#000"/>
<rect y="1.800" width="107" height="29" fill="url(#msky4)"/>
<g filter="url(#mb4)"><path d="M28 21q20-4 48-1 10 2 31 6v4H20z" fill="#958cb8" opacity=".55"/><path d="M0 26h107v6H0z" fill="#7a6a90" opacity=".8"/></g>
<rect y="29.500" width="107" height="55" fill="url(#mct4)"/>
<g filter="url(#mb4)"><path d="M0 31h62l8 6-30 8-20 20L0 72z" fill="#75627a"/><path d="M62 31h45v10l-20 2-16-4z" fill="#4e4a58"/><path d="M70 44l37 2v38H92z" fill="#3c4746"/>
<path d="M4 32h90v3.500H4z" fill="#c0a0b4" opacity=".55"/><path d="M10 34h30v4H10z" fill="#e8d6d0" opacity=".5"/>
<path d="M30 44q14-6 30-5t28 3 10 9-30 4-38-5z" fill="#9c7860" opacity=".7"/></g>
<g filter="url(#mb4s)"><path d="M64 54q0 10 10 18t20 12h13V72q-12-4-22-12t-9-8z" fill="#666a84"/>
<path d="M33.500 43q10 1 20-3t35 4q8 3 9 7" fill="none" stroke="#f0a848" stroke-width="1.400" opacity=".9"/>
<path d="M60 50q14-2 28 2" fill="none" stroke="#e8e0a0" stroke-width="1.600" opacity=".8"/>
<path d="M53 55q6 10 8 16t8 12" fill="none" stroke="#f09838" stroke-width="1.500" opacity=".9"/>
<path d="M29 64l12-1.500v3L29 67z" fill="#d8d890"/><path d="M12 80q12-10 28-16" fill="none" stroke="#d8c8a0" stroke-width="1.300" opacity=".8"/>
<rect x="44.800" y="44.500" width="7.200" height="26" fill="#9a5a48"/><rect x="50" y="58" width="5" height="24" fill="#7a4a44"/>
<rect x="47.900" y="64.800" width="5.200" height="18" fill="#cdc7d2"/><rect x="54" y="72.600" width="9" height="11.500" fill="#b9b1c2"/><rect x="37.500" y="71" width="6.200" height="12" fill="#a79fb0"/>
<rect x="10" y="29" width="2.200" height="8" fill="#4a5a8c"/><rect x="52" y="26.500" width="1.600" height="7" fill="#6a5a80"/>
<rect x="14" y="50" width="4" height="14" fill="#8f8090" opacity=".8"/><rect x="20" y="55" width="4" height="14" fill="#a090a0" opacity=".7"/><rect x="6" y="46" width="3" height="12" fill="#857688" opacity=".8"/>
<rect x="58" y="45.500" width="9" height="2.500" fill="#f0e4f0" opacity=".85"/></g>
<rect y="84.300" width="107" height="4.700" fill="#000"/></svg></div>
<div class="pic" style="left:260px;top:252px;width:110px"><svg width="106" height="89" viewBox="0 0 107 89" preserveAspectRatio="none"><rect width="107" height="89" fill="#fff"/>
<text x="53.300" y="11.400" font-size="7.700" text-anchor="middle" fill="#6e6e6e" font-family="Liberation Sans,Noto Sans CJK SC,sans-serif">图表标题</text>
<path d="M0 20.500h107M0 30.900h107M0 41.800h107M0 52.700h107M0 63.200h107" stroke="#e6e6e6" stroke-width=".8"/>
<g fill="#4472c4"><rect x="0" y="31.200" width="5.800" height="31.800"/><rect x="30.200" y="27.100" width="6.700" height="35.900"/><rect x="61.300" y="32.200" width="6.700" height="30.800"/><rect x="92.900" y="35.400" width="6.200" height="27.600"/></g>
<g fill="#ffc000"><rect x="21" y="52.700" width="7" height="10.300"/><rect x="52.200" y="47" width="6.900" height="16"/><rect x="83.300" y="50.300" width="7.200" height="12.700"/></g>
<g font-size="4.700" fill="#8a8a8a" text-anchor="middle" font-family="Liberation Sans,Noto Sans CJK SC,sans-serif"><text x="1" y="72.500">张</text><text x="28.900" y="72.500">小韩</text><text x="59.900" y="72.500">小王</text><text x="91" y="72.500">小周</text></g>
<rect x="19.200" y="80.300" width="2.700" height="2.700" fill="#ffc000"/><rect x="54.200" y="80.300" width="2.700" height="2.700" fill="#4472c4"/>
<g font-size="4.900" fill="#7a7a7a" font-family="Liberation Sans,Noto Sans CJK SC,sans-serif"><text x="23.100" y="83.500">11月销售额</text><text x="58.900" y="83.500">当前总销售额</text></g></svg></div>
<div class="pic" style="left:428px;top:252px;width:110px"><svg width="106" height="89" viewBox="0 0 107 89" preserveAspectRatio="none"><defs><linearGradient id="mbg6" x1="0" y1="0" x2="1" y2="0"><stop offset="0" stop-color="#9d9e95"/><stop offset=".3" stop-color="#a9aaa0"/><stop offset="1" stop-color="#a5a69d"/></linearGradient>
<linearGradient id="mct6" x1="0" y1="0" x2="0" y2="1"><stop offset="0" stop-color="#bdbde2"/><stop offset="1" stop-color="#a8aad8"/></linearGradient>
<filter id="mb6" x="-10%" y="-10%" width="120%" height="120%"><feGaussianBlur stdDeviation=".6"/></filter></defs>
<rect width="107" height="89" fill="url(#mbg6)"/>
<g filter="url(#mb6)">
<path d="M0 89V58q6-4 16-7l18-5 8-3h22l8 3 18 5q10 3 17 7v31z" fill="url(#mct6)"/>
<path d="M37 46l7-4h22l7 4-10 10-8 7-8-7z" fill="#dcd8e0"/>
<path d="M45 52.500l5 2 5-2 1.500 5-3.500 20-3 6-3-6-3.500-20z" fill="#2a3152"/>
<path d="M50 62l7-6 11 3-11 15zM50 62l-7-6-11 3 11 15z" fill="#c6c6ea" opacity=".6"/>
<path d="M50 89V62" stroke="#8e90c4" stroke-width=".8"/>
<ellipse cx="30.500" cy="24" rx="3" ry="5.500" fill="#a87c64"/><ellipse cx="69.500" cy="24" rx="3" ry="5.500" fill="#a87c64"/>
<path d="M32 12q0 16 3 24t9 10h12q6-2 9-10t3-24q-8-6-18-6T32 12z" fill="#b89078"/>
<path d="M25.900 21Q23 3 36-1h28q13 4 10 22l-4-3q-1-6-6-8.500T50 7.500 36 9.500 30 18z" fill="#54b2dc"/>
<path d="M30 7q10-6 20-6t20 6q-10-4-20-4T30 7z" fill="#86cdea" opacity=".8"/>
<path d="M33 13.500q8.500-1.500 17-1.500t17 1.500v5.500q-4 2.500-8 2t-6-2.500h-6q-2 2-6 2.500t-8-2z" fill="#dccfc6" opacity=".9"/>
<path d="M38 15h8v3.500h-8zM55 15h8v3.500h-8z" fill="#fff" opacity=".75"/>
<path d="M33.700 21q8-2 16.300-2t16.300 2q1.500 10-2 17T50 46.500 35.700 38t-2-17z" fill="#e7eaf3"/>
<path d="M36 29q14 5 28 0M37 35q13 5 26 0" fill="none" stroke="#cdd3e1" stroke-width=".9"/>
</g>
<rect x="85.500" y="2.300" width="9" height="40" fill="#f8e012"/>
<path d="M89.700 4v36" stroke="#3a3410" stroke-width="2.200" stroke-dasharray="2.200 .8" opacity=".85"/>
<path d="M83 2.300h5.700v25l-5.700-4z" fill="#f05a40"/>
<path d="M85.700 3.500v9" stroke="#4a2420" stroke-width="2.200" stroke-dasharray="2.200 .8" opacity=".8"/>
<g filter="url(#mb6)"><rect x="0" y="47.500" width="107" height="18" fill="#fff" opacity=".1"/>
<rect x="91.800" y="49" width="15.200" height="11" fill="#c0c070" opacity=".6"/>
<path d="M0 65.500h92M8 48h84" stroke="#e8e8f0" stroke-width=".5" opacity=".7"/>
<path d="M0 56q4-4 6 4" stroke="#d8c8b8" stroke-width="3" fill="none" opacity=".6"/>
<path d="M22 64q8-4 12-14M26 52q4 8 8 12M38 64q6-10 14-10M48 50q0 8-4 12M58 64q6-8 14-12t2 6-12 4q8 0 10 4M76 64q6-10 12-12M84 50q0 8-2 12M102 48l5-.5" fill="none" stroke="#3fd2de" stroke-width=".9" opacity=".9"/></g></svg></div>
<div class="pic" style="left:595px;top:252px;width:111px"><svg width="107" height="89" viewBox="0 0 107 89" preserveAspectRatio="none"><rect width="107" height="89" fill="#2b579a"/>
<rect x="57.900" y="27.700" width="18.300" height="34.300" fill="#fff"/>
<path d="M57.900 32.800h14.200M57.900 37.500h14.200M57.900 42.200h14.200M57.900 46.700h14.200M57.900 51.500h14.200M57.900 56.100h14.200" stroke="#2b579a" stroke-width="1.900"/>
<path d="M29.500 27 56.800 22.500v44.500L29.500 62.300z" fill="#fff"/>
<text transform="translate(42.700 52.700) scale(.82 1)" font-size="22.500" font-weight="bold" text-anchor="middle" fill="#2b579a" font-family="Liberation Sans,sans-serif">W</text></svg></div>
<div class="pic" style="left:763px;top:252px;width:111px"><svg width="107" height="89" viewBox="0 0 107 89" preserveAspectRatio="none"><defs><linearGradient id="msky8" x1="0" y1="0" x2="0" y2="1"><stop offset="0" stop-color="#2488dc"/><stop offset=".5" stop-color="#56a8e8"/><stop offset="1" stop-color="#b4daf2"/></linearGradient>
<linearGradient id="msea8" x1="0" y1="0" x2="0" y2="1"><stop offset="0" stop-color="#0cb4c6"/><stop offset=".25" stop-color="#22c8d6"/><stop offset=".5" stop-color="#4ad6dc"/><stop offset=".72" stop-color="#a4e6e4"/><stop offset=".88" stop-color="#dcefe8"/><stop offset="1" stop-color="#f3f4ee"/></linearGradient>
<filter id="mb8" x="-20%" y="-20%" width="140%" height="140%"><feGaussianBlur stdDeviation="1.300"/></filter><filter id="mb8s" x="-10%" y="-10%" width="120%" height="120%"><feGaussianBlur stdDeviation=".4"/></filter></defs>
<rect width="107" height="46" fill="url(#msky8)"/>
<g fill="#fff" filter="url(#mb8)"><ellipse cx="5" cy="10" rx="9" ry="9"/><ellipse cx="14" cy="20" rx="10" ry="7"/><ellipse cx="20" cy="27" rx="13" ry="6"/><ellipse cx="30" cy="19" rx="9" ry="6"/><ellipse cx="29" cy="31" rx="7" ry="4"/><ellipse cx="45" cy="25" rx="9" ry="4.500"/><ellipse cx="4" cy="30" rx="7" ry="6"/><ellipse cx="28.500" cy="9.500" rx="2.500" ry="1.800"/><ellipse cx="85" cy="21" rx="9" ry="2" opacity=".55"/><ellipse cx="68" cy="31" rx="4" ry="3" opacity=".8"/><ellipse cx="56" cy="36" rx="6" ry="3.500" opacity=".6"/><ellipse cx="96" cy="6" rx="9" ry="3" opacity=".35"/><ellipse cx="12" cy="40" rx="14" ry="3" opacity=".5"/><ellipse cx="76" cy="38" rx="8" ry="3" opacity=".5"/></g>
<rect y="45" width="107" height="44" fill="url(#msea8)"/>
<g filter="url(#mb8s)"><path d="M0 43.400h17v1.800H0z" fill="#4a4a48"/>
<path d="M41.700 43.600h65v3.800h-65z" fill="#6d6a62"/><path d="M42 42.500h38v1.600H42z" fill="#8a7f78"/>
<path d="M18.400 44h23.300v4.200H18.400z" fill="#4a4038"/>
<path d="M26 43.800l4.500-5.500q4-1.500 8 0 3-.5 4.500 1.500l2.500 4z" fill="#7b695a"/>
<rect x="26" y="43.500" width="11.500" height="4.600" fill="#ccd4d0"/>
<path d="M80 45.500h27v5.500q-14-.5-27-3z" fill="#8c9a98"/>
<path d="M80 43.500h27v2.300H80z" fill="#4f8f2e"/>
<path d="M80 32v12M88 33.500v11M97 31v13M103 32v12" stroke="#6a6a4a" stroke-width=".7"/>
<g fill="#3d7d3a"><ellipse cx="80" cy="31.500" rx="1.800" ry="1.400"/><ellipse cx="88" cy="33" rx="3.200" ry="2.200"/><ellipse cx="92" cy="36" rx="2.500" ry="2"/><ellipse cx="97" cy="33" rx="2.500" ry="2.500"/><ellipse cx="102" cy="31" rx="4" ry="3"/><ellipse cx="105" cy="35" rx="2.500" ry="3"/></g>
<path d="M94 41h10v3H94z" fill="#cfc7c0"/></g></svg></div>
<div class="pic" style="left:428px;top:366px;width:110px"><svg width="106" height="89" viewBox="0 0 107 89" preserveAspectRatio="none"><defs><linearGradient id="mo9a" x1=".8" y1="0" x2=".1" y2="1"><stop offset="0" stop-color="#6e0808"/><stop offset=".4" stop-color="#c2181c"/><stop offset="1" stop-color="#cf4a78"/></linearGradient>
<linearGradient id="mo9b" x1="0" y1="0" x2="0" y2="1"><stop offset="0" stop-color="#f9a512"/><stop offset=".45" stop-color="#ea5e0a"/><stop offset="1" stop-color="#df3a06"/></linearGradient>
<linearGradient id="mo9c" x1="0" y1="0" x2="1" y2="0"><stop offset="0" stop-color="#f01a30"/><stop offset="1" stop-color="#8c1a2a"/></linearGradient>
<filter id="mb9" x="-10%" y="-10%" width="120%" height="120%"><feGaussianBlur stdDeviation=".3"/></filter></defs>
<rect width="107" height="89" fill="#0ca5e3"/>
<g filter="url(#mb9)"><path d="M39.200 35.100 50.400 29.300 53 30.100v4.500L45 37.500l-.2 11.100-5 2.400z" fill="url(#mo9a)"/>
<path d="M43.600 52.200l1.200-.6H53v5.300l-2.600.8z" fill="url(#mo9c)"/>
<path d="M53 29.900l8.500 2.900v21.700L53 57.200z" fill="url(#mo9b)"/></g></svg></div>
<div class="pic" style="left:595px;top:366px;width:111px"><svg width="107" height="89" viewBox="0 0 107 89" preserveAspectRatio="none"><defs><filter id="mb10" x="-20%" y="-20%" width="140%" height="140%"><feGaussianBlur stdDeviation="1.500"/></filter><filter id="mb10s" x="-20%" y="-20%" width="140%" height="140%"><feGaussianBlur stdDeviation=".7"/></filter></defs>
<rect width="107" height="89" fill="#d8141c"/>
<g filter="url(#mb10)" fill="none">
<path d="M-5 -4Q30 10 50 22t62 8" stroke="#7c0006" stroke-width="15"/>
<path d="M30 -6Q50 8 70 12t42 2" stroke="#ee2028" stroke-width="13"/>
<path d="M-5 14Q28 28 50 37t62 0" stroke="#8a0008" stroke-width="7"/>
<path d="M-5 26Q26 40 50 45t62-6" stroke="#f02830" stroke-width="6"/>
<path d="M-5 34Q26 48 52 52t60-4" stroke="#b80c14" stroke-width="5"/>
<path d="M46 58q30 2 66-6" stroke="#e62028" stroke-width="12"/>
<path d="M-5 46Q24 64 50 72t62-2" stroke="#860008" stroke-width="13"/>
<path d="M-5 60Q24 76 54 82t58-4" stroke="#e8222a" stroke-width="7"/>
<path d="M-5 76Q20 90 50 96" stroke="#900008" stroke-width="14"/>
<path d="M50 92q30 0 62-8" stroke="#d4161e" stroke-width="8"/>
</g>
<g filter="url(#mb10s)" fill="none"><path d="M0 3Q30 16 52 27t55 9" stroke="#ff3a3a" stroke-width="1" opacity=".8"/><path d="M36 0Q56 10 78 11t29-2" stroke="#ff4040" stroke-width="2" opacity=".6"/><path d="M50 43q30 3 57-6" stroke="#ff3838" stroke-width="1" opacity=".7"/></g></svg></div>
<div class="lab" style="left:220px;top:217px">XX 摄</div>
<div class="lab" style="left:387px;top:217px"></div>
<div class="lab" style="left:555px;top:217px"></div>
<div class="lab" style="left:723px;top:217px"></div>
<div class="lab" style="left:220px;top:330px"></div>
<div class="lab" style="left:387px;top:330px"></div>
<div class="lab" style="left:555px;top:330px"></div>
<div class="lab" style="left:723px;top:330px"></div>
<div class="lab" style="left:387px;top:444px"></div>
<div class="lab" style="left:555px;top:444px"></div></div></div></div><span class="tn sel" style="top:560px">11</span>
<svg class="ico" style="left:11px;top:578px" width="12" height="10" viewBox="0 0 12 10"><path d="M7 .8l1.150 2.650 2.850.250-2.150 1.900.650 2.800L7 6.900 4.500 8.400l.650-2.800L3 3.700l2.850-.250z" fill="#6a6a6a"/><path d="M1 2.800l1.300.600M.8 5.800h1.800" stroke="#6a6a6a" stroke-width=".9"/></svg>
<div class="th" style="top:711px"><div class="ti"><svg class="ico" style="left:0;top:0" width="226" height="127" viewBox="0 0 226 127"><path d="M85 26.300h27" stroke="#93739f" stroke-width="2.600"/><g fill="none" stroke="#8d9bbb" stroke-width=".7"><rect x="31.200" y="33.200" width="140.800" height="64.400"/><path d="M101.500 33.200v64.400M31.200 49.400h140.800M31.200 65.500h140.800M31.200 81.300h140.800"/></g><g font-size="4.300" fill="#eef1f8" text-anchor="middle" font-family="Liberation Sans,Noto Sans CJK SC,sans-serif" font-weight="700"><text x="66" y="43.200">姓名</text><text x="136.300" y="43.200">考核成绩</text><text x="66" y="59.100">张三</text><text x="136.300" y="59.100">69</text><text x="66" y="75.100">李四</text><text x="136.300" y="75.100">68</text><text x="66" y="91.100">王五</text><text x="136.300" y="91.100">73</text></g></svg></div></div><span class="tn" style="top:709px">12</span>
<div class="th" style="top:860px"><div class="ti"><svg class="ico" style="left:0;top:0" width="226" height="127" viewBox="0 0 226 127"><g stroke="#e6e9f2"><path d="M49 46h2M55 46h59" stroke-width="2.400"/><path d="M49 53h2M55 52.500h117M55 56.500h60" stroke-width="2.600"/><path d="M56 62.500h2M62 62.500h84" stroke-width="1.600" opacity=".85"/><path d="M56 69h2M62 69h94" stroke-width="1.600" opacity=".85"/></g></svg></div></div><span class="tn" style="top:858px">13</span>
</div>
<div class="abs" style="left:278px;top:207px;width:15px;height:794px;background:#dadada"></div>
<div class="abs" style="left:278px;top:192px;width:15px;height:15px;background:#fff;border:1px solid #ababab"></div>
<svg class="ico" style="left:282px;top:197px" width="7" height="4" viewBox="0 0 7 4"><path d="M0 4L3.500 0 7 4z" fill="#777"/></svg>
<div class="abs" style="left:278px;top:666px;width:15px;height:334px;background:#fff;border:1px solid #ababab"></div>
<div class="abs" style="left:278px;top:1001px;width:15px;height:14px;background:#fff;border:1px solid #dcdcdc"></div>
<svg class="ico" style="left:282px;top:1006px" width="7" height="4" viewBox="0 0 7 4"><path d="M0 0h7L3.500 4z" fill="#777"/></svg>
<div class="abs" style="left:297px;top:192px;width:1px;height:823px;background:#c2c2c2"></div>
<div id="hruler">
<span class="rn" style="left:19.0px">18</span>
<span class="rn" style="left:48.1px">17</span>
<span class="rn" style="left:77.2px">16</span>
<span class="rn" style="left:106.4px">15</span>
<span class="rn" style="left:135.5px">14</span>
<span class="rn" style="left:164.6px">13</span>
<span class="rn" style="left:193.7px">12</span>
<span class="rn" style="left:222.8px">11</span>
<span class="rn" style="left:251.9px">10</span>
<span class="rn" style="left:281.0px">9</span>
<span class="rn" style="left:310.1px">8</span>
<span class="rn" style="left:339.2px">7</span>
<span class="rn" style="left:368.3px">6</span>
<span class="rn" style="left:397.5px">5</span>
<span class="rn" style="left:426.6px">4</span>
<span class="rn" style="left:455.7px">3</span>
<span class="rn" style="left:484.8px">2</span>
<span class="rn" style="left:513.9px">1</span>
<span class="rn" style="left:543.0px">0</span>
<span class="rn" style="left:572.1px">1</span>
<span class="rn" style="left:601.2px">2</span>
<span class="rn" style="left:630.3px">3</span>
<span class="rn" style="left:659.4px">4</span>
<span class="rn" style="left:688.5px">5</span>
<span class="rn" style="left:717.7px">6</span>
<span class="rn" style="left:746.8px">7</span>
<span class="rn" style="left:775.9px">8</span>
<span class="rn" style="left:805.0px">9</span>
<span class="rn" style="left:834.1px">10</span>
<span class="rn" style="left:863.2px">11</span>
<span class="rn" style="left:892.3px">12</span>
<span class="rn" style="left:921.4px">13</span>
<span class="rn" style="left:950.5px">14</span>
<span class="rn" style="left:979.7px">15</span>
<span class="rn" style="left:1008.8px">16</span>
<span class="rn" style="left:1037.9px">17</span>
<span class="rn" style="left:1067.0px">18</span>
<svg class="ico" style="left:0;top:0" width="1086" height="14" viewBox="0 0 1086 14"><path d="M5.5 4v4M34.5 4v4M63.5 4v4M93.5 4v4M122.5 4v4M151.5 4v4M180.5 4v4M209.5 4v4M238.5 4v4M267.5 4v4M296.5 4v4M325.5 4v4M355.5 4v4M384.5 4v4M413.5 4v4M442.5 4v4M471.5 4v4M500.5 4v4M529.5 4v4M558.5 4v4M587.5 4v4M617.5 4v4M646.5 4v4M675.5 4v4M704.5 4v4M733.5 4v4M762.5 4v4M791.5 4v4M820.5 4v4M849.5 4v4M879.5 4v4M908.5 4v4M937.5 4v4M966.5 4v4M995.5 4v4M1024.5 4v4M1053.5 4v4M1082.5 4v4" stroke="#555" stroke-width="1" shape-rendering="crispEdges"/><path d="M12 6.500h1M26 6.500h1M41 6.500h1M55 6.500h1M70 6.500h1M85 6.500h1M99 6.500h1M114 6.500h1M128 6.500h1M143 6.500h1M157 6.500h1M172 6.500h1M186 6.500h1M201 6.500h1M216 6.500h1M230 6.500h1M245 6.500h1M259 6.500h1M274 6.500h1M288 6.500h1M303 6.500h1M317 6.500h1M332 6.500h1M347 6.500h1M361 6.500h1M376 6.500h1M390 6.500h1M405 6.500h1M419 6.500h1M434 6.500h1M448 6.500h1M463 6.500h1M478 6.500h1M492 6.500h1M507 6.500h1M521 6.500h1M536 6.500h1M550 6.500h1M565 6.500h1M579 6.500h1M594 6.500h1M608 6.500h1M623 6.500h1M638 6.500h1M652 6.500h1M667 6.500h1M681 6.500h1M696 6.500h1M710 6.500h1M725 6.500h1M739 6.500h1M754 6.500h1M769 6.500h1M783 6.500h1M798 6.500h1M812 6.500h1M827 6.500h1M841 6.500h1M856 6.500h1M870 6.500h1M885 6.500h1M900 6.500h1M914 6.500h1M929 6.500h1M943 6.500h1M958 6.500h1M972 6.500h1M987 6.500h1M1001 6.500h1M1016 6.500h1M1031 6.500h1M1045 6.500h1M1060 6.500h1M1074 6.500h1" stroke="#777" stroke-width="1" shape-rendering="crispEdges"/><path d="M182.500 0v14" stroke="#e0533a" stroke-dasharray="2 1.500" stroke-width="1"/></svg>
</div>
<div id="vruler">
<span class="vn" style="top:13.9px">10</span>
<span class="vn" style="top:43.0px">9</span>
<span class="vn" style="top:72.1px">8</span>
<span class="vn" style="top:101.2px">7</span>
<span class="vn" style="top:130.3px">6</span>
<span class="vn" style="top:159.4px">5</span>
<span class="vn" style="top:188.6px">4</span>
<span class="vn" style="top:217.7px">3</span>
<span class="vn" style="top:246.8px">2</span>
<span class="vn" style="top:275.9px">1</span>
<span class="vn" style="top:305.0px">0</span>
<span class="vn" style="top:334.1px">1</span>
<span class="vn" style="top:363.2px">2</span>
<span class="vn" style="top:392.3px">3</span>
<span class="vn" style="top:421.4px">4</span>
<span class="vn" style="top:450.5px">5</span>
<span class="vn" style="top:479.7px">6</span>
<span class="vn" style="top:508.8px">7</span>
<span class="vn" style="top:537.9px">8</span>
<span class="vn" style="top:567.0px">9</span>
<span class="vn" style="top:596.1px">10</span>
<svg class="ico" style="left:0;top:0" width="14" height="611" viewBox="0 0 14 611"><path d="M5 28.5h4M5 58.5h4M5 87.5h4M5 116.5h4M5 145.5h4M5 174.5h4M5 203.5h4M5 232.5h4M5 261.5h4M5 290.5h4M5 320.5h4M5 349.5h4M5 378.5h4M5 407.5h4M5 436.5h4M5 465.5h4M5 494.5h4M5 523.5h4M5 552.5h4M5 582.5h4M5 611.5h4" stroke="#555" stroke-width="1" shape-rendering="crispEdges"/><path d="M7 7v1M7 21v1M7 36v1M7 50v1M7 65v1M7 79v1M7 94v1M7 109v1M7 123v1M7 138v1M7 152v1M7 167v1M7 181v1M7 196v1M7 210v1M7 225v1M7 240v1M7 254v1M7 269v1M7 283v1M7 298v1M7 312v1M7 327v1M7 341v1M7 356v1M7 370v1M7 385v1M7 400v1M7 414v1M7 429v1M7 443v1M7 458v1M7 472v1M7 487v1M7 501v1M7 516v1M7 531v1M7 545v1M7 560v1M7 574v1M7 589v1M7 603v1" stroke="#777" stroke-width="1" shape-rendering="crispEdges"/><path d="M0 100.500h14" stroke="#e0533a" stroke-dasharray="2 1.500" stroke-width="1"/></svg>
</div>
<div id="slide">
<div class="pic" style="left:260px;top:139px;width:110px"><svg width="106" height="89" viewBox="0 0 107 89" preserveAspectRatio="none"><defs><linearGradient id="sky1" x1="0" y1="0" x2="0" y2="1"><stop offset="0" stop-color="#5789d6"/><stop offset=".35" stop-color="#79a6e6"/><stop offset=".7" stop-color="#b7cdee"/><stop offset="1" stop-color="#f1e2d6"/></linearGradient>
<linearGradient id="wat1" x1="0" y1="0" x2="0" y2="1"><stop offset="0" stop-color="#aebfd8"/><stop offset=".3" stop-color="#c6cbdc"/><stop offset=".6" stop-color="#7f9cc6"/><stop offset="1" stop-color="#3966a4"/></linearGradient>
<linearGradient id="mt1" x1="0" y1="0" x2="0" y2="1"><stop offset="0" stop-color="#4a7cbc"/><stop offset="1" stop-color="#23508c"/></linearGradient>
<filter id="b1" x="-10%" y="-10%" width="120%" height="120%"><feGaussianBlur stdDeviation="1.200"/></filter><filter id="b1s" x="-10%" y="-10%" width="120%" height="120%"><feGaussianBlur stdDeviation=".5"/></filter></defs>
<rect width="107" height="48" fill="url(#sky1)"/>
<g filter="url(#b1)"><path d="M6 5q22-4 42-1t30 0q-14 5-34 4T6 5z" fill="#e3c9e4" opacity=".9"/><path d="M40 20q18-4 42 0q-18 3-42 0z" fill="#ecd2e0" opacity=".8"/><path d="M0 24q14-3 26 0-12 4-26 3z" fill="#dfe6f6" opacity=".8"/><path d="M74 36q16-4 33-3v10H74z" fill="#f8d4bc" opacity=".9"/><path d="M0 36q12-2 22 2v6H0z" fill="#f3e4da" opacity=".7"/></g>
<path d="M0 44.500Q14 43 25 38.500T46 27q3-2.500 6-2.500h3q3 0 6 2.500Q74 36 86 40t21 5v4H0z" fill="url(#mt1)"/>
<path d="M45 28q4-3.500 7-3.500h3q3 0 7 3.500l3 3.500q-3-1-5 .500l-3-2-3 2.500-3-2.500-4 2-2-.5z" fill="#e4ebf6" filter="url(#b1s)"/>
<rect y="48" width="107" height="41" fill="url(#wat1)"/>
<path d="M0 45h107v5.500H0z" fill="#1e3c62"/>
<path d="M0 46.500q20-2 40-1t40-1 27 1v3H0z" fill="#2b4a70"/>
<path d="M0 50.500h107v1.800H0z" fill="#a9bcd8"/>
<g filter="url(#b1s)"><path d="M0 53.500Q20 55 32 60t18 11.500q3.500 3 7 0Q66 64 80 58.500t27-6v-1H0z" fill="#2e5c98"/><path d="M0 52h107v3H0z" fill="#3a5f8e"/></g>
<g filter="url(#b1)"><path d="M66 68q18-7 41-8v10q-22 2-41-2z" fill="#ecd0c4" opacity=".75"/><path d="M0 58q14 2 28 8-14 3-28 1z" fill="#d9d3dc" opacity=".7"/><path d="M30 82q25-4 50 0-25 4-50 0z" fill="#7f9ccc" opacity=".5"/></g></svg></div>
<div class="pic" style="left:424px;top:139px;width:111px"><svg width="107" height="89" viewBox="0 0 107 89" preserveAspectRatio="none"><defs><radialGradient id="gb2" cx=".5" cy=".45" r=".7"><stop offset="0" stop-color="#07896a"/><stop offset=".7" stop-color="#067c5e"/><stop offset="1" stop-color="#055f48"/></radialGradient><filter id="b2" x="-10%" y="-10%" width="120%" height="120%"><feGaussianBlur stdDeviation=".35"/></filter></defs>
<rect width="107" height="89" fill="#fbfaf7"/>
<g filter="url(#b2)"><path d="M0-10 2-5 5-7 4.500-2 9-3.500 7 0 10 2 5 4 6 7 1.500 5.500 0 10-1.500 5.500-6 7-5 4-10 2-7 0-9-3.500-4.500-2-5-7-2-5z" transform="translate(10.0 15.0) rotate(-20) scale(1.50)" fill="#c8460e"/><path d="M0-10 2-5 5-7 4.500-2 9-3.500 7 0 10 2 5 4 6 7 1.500 5.500 0 10-1.500 5.500-6 7-5 4-10 2-7 0-9-3.500-4.500-2-5-7-2-5z" transform="translate(4.0 28.0) rotate(30) scale(0.90)" fill="#dc5a16"/><path d="M0-10 2-5 5-7 4.500-2 9-3.500 7 0 10 2 5 4 6 7 1.500 5.500 0 10-1.500 5.500-6 7-5 4-10 2-7 0-9-3.500-4.500-2-5-7-2-5z" transform="translate(28.0 7.0) rotate(10) scale(1.10)" fill="#ee8a1a"/><path d="M0-10 2-5 5-7 4.500-2 9-3.500 7 0 10 2 5 4 6 7 1.500 5.500 0 10-1.500 5.500-6 7-5 4-10 2-7 0-9-3.500-4.500-2-5-7-2-5z" transform="translate(41.0 12.5) rotate(60) scale(0.60)" fill="#d9701c"/><path d="M0-10 2-5 5-7 4.500-2 9-3.500 7 0 10 2 5 4 6 7 1.500 5.500 0 10-1.500 5.500-6 7-5 4-10 2-7 0-9-3.500-4.500-2-5-7-2-5z" transform="translate(70.0 9.0) rotate(0) scale(1.30)" fill="#cf4a10"/><path d="M0-10 2-5 5-7 4.500-2 9-3.500 7 0 10 2 5 4 6 7 1.500 5.500 0 10-1.500 5.500-6 7-5 4-10 2-7 0-9-3.500-4.500-2-5-7-2-5z" transform="translate(60.0 13.0) rotate(-30) scale(0.70)" fill="#e2671a"/><path d="M0-10 2-5 5-7 4.500-2 9-3.500 7 0 10 2 5 4 6 7 1.500 5.500 0 10-1.500 5.500-6 7-5 4-10 2-7 0-9-3.500-4.500-2-5-7-2-5z" transform="translate(80.0 12.0) rotate(30) scale(0.60)" fill="#d95a14"/><g transform="translate(93.0 24.0) rotate(20)" fill="#b6560f"><ellipse cx="0" cy="-8.2" rx="3.3" ry="7.5" transform="rotate(-70)"/><ellipse cx="0" cy="-8.2" rx="3.3" ry="7.5" transform="rotate(-35)"/><ellipse cx="0" cy="-8.2" rx="3.3" ry="7.5" transform="rotate(0)"/><ellipse cx="0" cy="-8.2" rx="3.3" ry="7.5" transform="rotate(35)"/><ellipse cx="0" cy="-8.2" rx="3.3" ry="7.5" transform="rotate(70)"/></g><g transform="translate(7.0 53.0) rotate(-95)" fill="#bf6114"><ellipse cx="0" cy="-7.7" rx="3.1" ry="7.0" transform="rotate(-70)"/><ellipse cx="0" cy="-7.7" rx="3.1" ry="7.0" transform="rotate(-35)"/><ellipse cx="0" cy="-7.7" rx="3.1" ry="7.0" transform="rotate(0)"/><ellipse cx="0" cy="-7.7" rx="3.1" ry="7.0" transform="rotate(35)"/><ellipse cx="0" cy="-7.7" rx="3.1" ry="7.0" transform="rotate(70)"/></g><path d="M0-10 2-5 5-7 4.500-2 9-3.500 7 0 10 2 5 4 6 7 1.500 5.500 0 10-1.500 5.500-6 7-5 4-10 2-7 0-9-3.500-4.500-2-5-7-2-5z" transform="translate(9.5 38.0) rotate(40) scale(0.60)" fill="#f2b01c"/><path d="M0-10 2-5 5-7 4.500-2 9-3.500 7 0 10 2 5 4 6 7 1.500 5.500 0 10-1.500 5.500-6 7-5 4-10 2-7 0-9-3.500-4.500-2-5-7-2-5z" transform="translate(99.0 39.0) rotate(-30) scale(0.60)" fill="#f0b424"/><path d="M0-10 2-5 5-7 4.500-2 9-3.500 7 0 10 2 5 4 6 7 1.500 5.500 0 10-1.500 5.500-6 7-5 4-10 2-7 0-9-3.500-4.500-2-5-7-2-5z" transform="translate(101.0 52.0) rotate(80) scale(1.30)" fill="#d9531a"/><path d="M0-10 2-5 5-7 4.500-2 9-3.500 7 0 10 2 5 4 6 7 1.500 5.500 0 10-1.500 5.500-6 7-5 4-10 2-7 0-9-3.500-4.500-2-5-7-2-5z" transform="translate(100.0 74.0) rotate(20) scale(1.30)" fill="#c8440e"/><path d="M0-10 2-5 5-7 4.500-2 9-3.500 7 0 10 2 5 4 6 7 1.500 5.500 0 10-1.500 5.500-6 7-5 4-10 2-7 0-9-3.500-4.500-2-5-7-2-5z" transform="translate(71.0 82.0) rotate(170) scale(1.00)" fill="#ee8c1c"/><path d="M0-10 2-5 5-7 4.500-2 9-3.500 7 0 10 2 5 4 6 7 1.500 5.500 0 10-1.500 5.500-6 7-5 4-10 2-7 0-9-3.500-4.500-2-5-7-2-5z" transform="translate(48.0 77.5) rotate(120) scale(0.50)" fill="#dd7a1a"/><path d="M0-10 2-5 5-7 4.500-2 9-3.500 7 0 10 2 5 4 6 7 1.500 5.500 0 10-1.500 5.500-6 7-5 4-10 2-7 0-9-3.500-4.500-2-5-7-2-5z" transform="translate(33.0 82.0) rotate(200) scale(1.00)" fill="#c8460e"/><path d="M0-10 2-5 5-7 4.500-2 9-3.500 7 0 10 2 5 4 6 7 1.500 5.500 0 10-1.500 5.500-6 7-5 4-10 2-7 0-9-3.500-4.500-2-5-7-2-5z" transform="translate(21.0 82.0) rotate(160) scale(0.80)" fill="#f0a01c"/><path d="M0-10 2-5 5-7 4.500-2 9-3.500 7 0 10 2 5 4 6 7 1.500 5.500 0 10-1.500 5.500-6 7-5 4-10 2-7 0-9-3.500-4.500-2-5-7-2-5z" transform="translate(9.0 68.0) rotate(-140) scale(1.00)" fill="#f6c61c"/><path d="M0-10 2-5 5-7 4.500-2 9-3.500 7 0 10 2 5 4 6 7 1.500 5.500 0 10-1.500 5.500-6 7-5 4-10 2-7 0-9-3.500-4.500-2-5-7-2-5z" transform="translate(88.0 80.0) rotate(100) scale(0.60)" fill="#e2671a"/></g>
<rect x="13.500" y="15" width="82" height="61" fill="#000" opacity=".12" filter="url(#b2)"/>
<rect x="14.800" y="15.600" width="79.200" height="58.200" rx="1" fill="#b4561c"/>
<rect x="16" y="17" width="76.800" height="55.400" fill="#c97030"/>
<rect x="18" y="19.300" width="73" height="50.800" fill="#8a3c10"/>
<rect x="18.500" y="19.800" width="72" height="49.800" fill="url(#gb2)"/>
<g filter="url(#b2)"><path d="M0-10 2-5 5-7 4.500-2 9-3.500 7 0 10 2 5 4 6 7 1.500 5.500 0 10-1.500 5.500-6 7-5 4-10 2-7 0-9-3.500-4.500-2-5-7-2-5z" transform="translate(19.0 24.0) rotate(-25) scale(0.90)" fill="#f3cc22"/><path d="M0-10 2-5 5-7 4.500-2 9-3.500 7 0 10 2 5 4 6 7 1.500 5.500 0 10-1.500 5.500-6 7-5 4-10 2-7 0-9-3.500-4.500-2-5-7-2-5z" transform="translate(90.5 68.5) rotate(0) scale(0.26)" fill="#f2b824"/></g></svg></div>
<div class="pic" style="left:595px;top:139px;width:111px"><svg width="107" height="89" viewBox="0 0 107 89" preserveAspectRatio="none"><defs><radialGradient id="bk3"><stop offset="0" stop-color="#fffef6"/><stop offset=".55" stop-color="#f3eedf"/><stop offset="1" stop-color="#d9d3c2" stop-opacity="0"/></radialGradient>
<linearGradient id="bg3" x1="0" y1="0" x2="0" y2="1"><stop offset="0" stop-color="#77736c"/><stop offset=".38" stop-color="#5e5a50"/><stop offset=".55" stop-color="#34301f"/><stop offset="1" stop-color="#1f1b10"/></linearGradient>
<linearGradient id="lf3" x1="0" y1="0" x2="1" y2=".3"><stop offset="0" stop-color="#e88a18"/><stop offset=".3" stop-color="#f2a61e"/><stop offset=".55" stop-color="#f8c62a"/><stop offset="1" stop-color="#f6bb26"/></linearGradient>
<filter id="b3" x="-20%" y="-20%" width="140%" height="140%"><feGaussianBlur stdDeviation="1.600"/></filter><filter id="b3s" x="-10%" y="-10%" width="120%" height="120%"><feGaussianBlur stdDeviation=".4"/></filter></defs>
<rect width="107" height="89" fill="url(#bg3)"/>
<g filter="url(#b3)"><circle cx="9" cy="15" r="15" fill="url(#bk3)"/><circle cx="48" cy="5" r="14" fill="url(#bk3)"/><circle cx="96" cy="19" r="21" fill="url(#bk3)"/><circle cx="80" cy="3" r="11" fill="url(#bk3)"/><circle cx="26" cy="2" r="8" fill="url(#bk3)"/><rect x="85" y="42" width="22" height="47" fill="#1e190f"/></g>
<g filter="url(#b3s)"><path d="M14.200 3.100 23 .7 39.600 .2 43.200 6.500 43.800 14.800 50 14.300 59.300 6.500 66 1.300 83.200 3.300 87.300 12.200 82 22 76.400 35.600 91.400 35.600 106 40.800 99.700 53.300 98.700 60.600 85.200 63.800 74.900 71 73.800 75.200 78 85.600 64.500 76.300 50 68 34.400 62.700 26 54.400 20 40.800 17.300 29.400 21 25.200 18.400 13.800z" fill="url(#lf3)"/>
<path d="M34.400 62.700 50 40 66 20 82 6M34.400 62.700 33 30 32 2M34.400 62.700 70 52 104 41M34.400 62.700 60 70 76 82" fill="none" stroke="#d98a1a" stroke-width=".7" opacity=".8"/>
<path d="M14.200 3.100 18.400 13.800 21 25.200 17.300 29.400 20 40.800 26 54.400 34.400 62.700 30 40 28 20z" fill="#e07f16" opacity=".55"/>
<path d="M34.400 62.700 50 68 64.500 76.300 78 85.600 73.800 75.200 60 66z" fill="#f9cf30" opacity=".7"/>
<path d="M34.800 62.500Q28 74 23 89" fill="none" stroke="#8a3e1c" stroke-width="1.300"/>
<path d="M47 40q-2 8 1 10 8 1 15-6-1-5-8-5z" fill="#b8b2ae"/><path d="M55 44q5-1 8 0-4 5-12 6z" fill="#6e6868"/>
<path d="M43 35q1-6 6-5.500t5 6.500q0 5-4 9-5 1-6-4z" fill="#fffdf0"/></g>
<circle cx="11.500" cy="33" r="1.300" fill="#f4f4f8" filter="url(#b3s)"/></svg></div>
<div class="pic" style="left:763px;top:139px;width:111px"><svg width="107" height="89" viewBox="0 0 107 89" preserveAspectRatio="none"><defs><linearGradient id="sky4" x1="0" y1="0" x2="0" y2="1"><stop offset="0" stop-color="#5558a2"/><stop offset=".45" stop-color="#6b68a8"/><stop offset=".8" stop-color="#7d6f9c"/><stop offset="1" stop-color="#6f5f82"/></linearGradient>
<linearGradient id="ct4" x1="0" y1="0" x2="0" y2="1"><stop offset="0" stop-color="#6e5d7c"/><stop offset=".4" stop-color="#5c4d62"/><stop offset="1" stop-color="#3f3a48"/></linearGradient>
<filter id="b4" x="-20%" y="-20%" width="140%" height="140%"><feGaussianBlur stdDeviation="1.100"/></filter><filter id="b4s" x="-10%" y="-10%" width="120%" height="120%"><feGaussianBlur stdDeviation=".45"/></filter></defs>
<rect width="107" height="89" fill="#000"/>
<rect y="1.800" width="107" height="29" fill="url(#sky4)"/>
<g filter="url(#b4)"><path d="M28 21q20-4 48-1 10 2 31 6v4H20z" fill="#958cb8" opacity=".55"/><path d="M0 26h107v6H0z" fill="#7a6a90" opacity=".8"/></g>
<rect y="29.500" width="107" height="55" fill="url(#ct4)"/>
<g filter="url(#b4)"><path d="M0 31h62l8 6-30 8-20 20L0 72z" fill="#75627a"/><path d="M62 31h45v10l-20 2-16-4z" fill="#4e4a58"/><path d="M70 44l37 2v38H92z" fill="#3c4746"/>
<path d="M4 32h90v3.500H4z" fill="#c0a0b4" opacity=".55"/><path d="M10 34h30v4H10z" fill="#e8d6d0" opacity=".5"/>
<path d="M30 44q14-6 30-5t28 3 10 9-30 4-38-5z" fill="#9c7860" opacity=".7"/></g>
<g filter="url(#b4s)"><path d="M64 54q0 10 10 18t20 12h13V72q-12-4-22-12t-9-8z" fill="#666a84"/>
<path d="M33.500 43q10 1 20-3t35 4q8 3 9 7" fill="none" stroke="#f0a848" stroke-width="1.400" opacity=".9"/>
<path d="M60 50q14-2 28 2" fill="none" stroke="#e8e0a0" stroke-width="1.600" opacity=".8"/>
<path d="M53 55q6 10 8 16t8 12" fill="none" stroke="#f09838" stroke-width="1.500" opacity=".9"/>
<path d="M29 64l12-1.500v3L29 67z" fill="#d8d890"/><path d="M12 80q12-10 28-16" fill="none" stroke="#d8c8a0" stroke-width="1.300" opacity=".8"/>
<rect x="44.800" y="44.500" width="7.200" height="26" fill="#9a5a48"/><rect x="50" y="58" width="5" height="24" fill="#7a4a44"/>
<rect x="47.900" y="64.800" width="5.200" height="18" fill="#cdc7d2"/><rect x="54" y="72.600" width="9" height="11.500" fill="#b9b1c2"/><rect x="37.500" y="71" width="6.200" height="12" fill="#a79fb0"/>
<rect x="10" y="29" width="2.200" height="8" fill="#4a5a8c"/><rect x="52" y="26.500" width="1.600" height="7" fill="#6a5a80"/>
<rect x="14" y="50" width="4" height="14" fill="#8f8090" opacity=".8"/><rect x="20" y="55" width="4" height="14" fill="#a090a0" opacity=".7"/><rect x="6" y="46" width="3" height="12" fill="#857688" opacity=".8"/>
<rect x="58" y="45.500" width="9" height="2.500" fill="#f0e4f0" opacity=".85"/></g>
<rect y="84.300" width="107" height="4.700" fill="#000"/></svg></div>
<div class="pic" style="left:260px;top:252px;width:110px"><svg width="106" height="89" viewBox="0 0 107 89" preserveAspectRatio="none"><rect width="107" height="89" fill="#fff"/>
<text x="53.300" y="11.400" font-size="7.700" text-anchor="middle" fill="#6e6e6e" font-family="Liberation Sans,Noto Sans CJK SC,sans-serif">图表标题</text>
<path d="M0 20.500h107M0 30.900h107M0 41.800h107M0 52.700h107M0 63.200h107" stroke="#e6e6e6" stroke-width=".8"/>
<g fill="#4472c4"><rect x="0" y="31.200" width="5.800" height="31.800"/><rect x="30.200" y="27.100" width="6.700" height="35.900"/><rect x="61.300" y="32.200" width="6.700" height="30.800"/><rect x="92.900" y="35.400" width="6.200" height="27.600"/></g>
<g fill="#ffc000"><rect x="21" y="52.700" width="7" height="10.300"/><rect x="52.200" y="47" width="6.900" height="16"/><rect x="83.300" y="50.300" width="7.200" height="12.700"/></g>
<g font-size="4.700" fill="#8a8a8a" text-anchor="middle" font-family="Liberation Sans,Noto Sans CJK SC,sans-serif"><text x="1" y="72.500">张</text><text x="28.900" y="72.500">小韩</text><text x="59.900" y="72.500">小王</text><text x="91" y="72.500">小周</text></g>
<rect x="19.200" y="80.300" width="2.700" height="2.700" fill="#ffc000"/><rect x="54.200" y="80.300" width="2.700" height="2.700" fill="#4472c4"/>
<g font-size="4.900" fill="#7a7a7a" font-family="Liberation Sans,Noto Sans CJK SC,sans-serif"><text x="23.100" y="83.500">11月销售额</text><text x="58.900" y="83.500">当前总销售额</text></g></svg></div>
<div class="pic" style="left:428px;top:252px;width:110px"><svg width="106" height="89" viewBox="0 0 107 89" preserveAspectRatio="none"><defs><linearGradient id="bg6" x1="0" y1="0" x2="1" y2="0"><stop offset="0" stop-color="#9d9e95"/><stop offset=".3" stop-color="#a9aaa0"/><stop offset="1" stop-color="#a5a69d"/></linearGradient>
<linearGradient id="ct6" x1="0" y1="0" x2="0" y2="1"><stop offset="0" stop-color="#bdbde2"/><stop offset="1" stop-color="#a8aad8"/></linearGradient>
<filter id="b6" x="-10%" y="-10%" width="120%" height="120%"><feGaussianBlur stdDeviation=".6"/></filter></defs>
<rect width="107" height="89" fill="url(#bg6)"/>
<g filter="url(#b6)">
<path d="M0 89V58q6-4 16-7l18-5 8-3h22l8 3 18 5q10 3 17 7v31z" fill="url(#ct6)"/>
<path d="M37 46l7-4h22l7 4-10 10-8 7-8-7z" fill="#dcd8e0"/>
<path d="M45 52.500l5 2 5-2 1.500 5-3.500 20-3 6-3-6-3.500-20z" fill="#2a3152"/>
<path d="M50 62l7-6 11 3-11 15zM50 62l-7-6-11 3 11 15z" fill="#c6c6ea" opacity=".6"/>
<path d="M50 89V62" stroke="#8e90c4" stroke-width=".8"/>
<ellipse cx="30.500" cy="24" rx="3" ry="5.500" fill="#a87c64"/><ellipse cx="69.500" cy="24" rx="3" ry="5.500" fill="#a87c64"/>
<path d="M32 12q0 16 3 24t9 10h12q6-2 9-10t3-24q-8-6-18-6T32 12z" fill="#b89078"/>
<path d="M25.900 21Q23 3 36-1h28q13 4 10 22l-4-3q-1-6-6-8.500T50 7.500 36 9.500 30 18z" fill="#54b2dc"/>
<path d="M30 7q10-6 20-6t20 6q-10-4-20-4T30 7z" fill="#86cdea" opacity=".8"/>
<path d="M33 13.500q8.500-1.500 17-1.500t17 1.500v5.500q-4 2.500-8 2t-6-2.500h-6q-2 2-6 2.500t-8-2z" fill="#dccfc6" opacity=".9"/>
<path d="M38 15h8v3.500h-8zM55 15h8v3.500h-8z" fill="#fff" opacity=".75"/>
<path d="M33.700 21q8-2 16.300-2t16.300 2q1.500 10-2 17T50 46.500 35.700 38t-2-17z" fill="#e7eaf3"/>
<path d="M36 29q14 5 28 0M37 35q13 5 26 0" fill="none" stroke="#cdd3e1" stroke-width=".9"/>
</g>
<rect x="85.500" y="2.300" width="9" height="40" fill="#f8e012"/>
<path d="M89.700 4v36" stroke="#3a3410" stroke-width="2.200" stroke-dasharray="2.200 .8" opacity=".85"/>
<path d="M83 2.300h5.700v25l-5.700-4z" fill="#f05a40"/>
<path d="M85.700 3.500v9" stroke="#4a2420" stroke-width="2.200" stroke-dasharray="2.200 .8" opacity=".8"/>
<g filter="url(#b6)"><rect x="0" y="47.500" width="107" height="18" fill="#fff" opacity=".1"/>
<rect x="91.800" y="49" width="15.200" height="11" fill="#c0c070" opacity=".6"/>
<path d="M0 65.500h92M8 48h84" stroke="#e8e8f0" stroke-width=".5" opacity=".7"/>
<path d="M0 56q4-4 6 4" stroke="#d8c8b8" stroke-width="3" fill="none" opacity=".6"/>
<path d="M22 64q8-4 12-14M26 52q4 8 8 12M38 64q6-10 14-10M48 50q0 8-4 12M58 64q6-8 14-12t2 6-12 4q8 0 10 4M76 64q6-10 12-12M84 50q0 8-2 12M102 48l5-.5" fill="none" stroke="#3fd2de" stroke-width=".9" opacity=".9"/></g></svg></div>
<div class="pic" style="left:595px;top:252px;width:111px"><svg width="107" height="89" viewBox="0 0 107 89" preserveAspectRatio="none"><rect width="107" height="89" fill="#2b579a"/>
<rect x="57.900" y="27.700" width="18.300" height="34.300" fill="#fff"/>
<path d="M57.900 32.800h14.200M57.900 37.500h14.200M57.900 42.200h14.200M57.900 46.700h14.200M57.900 51.500h14.200M57.900 56.100h14.200" stroke="#2b579a" stroke-width="1.900"/>
<path d="M29.500 27 56.800 22.500v44.500L29.500 62.300z" fill="#fff"/>
<text transform="translate(42.700 52.700) scale(.82 1)" font-size="22.500" font-weight="bold" text-anchor="middle" fill="#2b579a" font-family="Liberation Sans,sans-serif">W</text></svg></div>
<div class="pic" style="left:763px;top:252px;width:111px"><svg width="107" height="89" viewBox="0 0 107 89" preserveAspectRatio="none"><defs><linearGradient id="sky8" x1="0" y1="0" x2="0" y2="1"><stop offset="0" stop-color="#2488dc"/><stop offset=".5" stop-color="#56a8e8"/><stop offset="1" stop-color="#b4daf2"/></linearGradient>
<linearGradient id="sea8" x1="0" y1="0" x2="0" y2="1"><stop offset="0" stop-color="#0cb4c6"/><stop offset=".25" stop-color="#22c8d6"/><stop offset=".5" stop-color="#4ad6dc"/><stop offset=".72" stop-color="#a4e6e4"/><stop offset=".88" stop-color="#dcefe8"/><stop offset="1" stop-color="#f3f4ee"/></linearGradient>
<filter id="b8" x="-20%" y="-20%" width="140%" height="140%"><feGaussianBlur stdDeviation="1.300"/></filter><filter id="b8s" x="-10%" y="-10%" width="120%" height="120%"><feGaussianBlur stdDeviation=".4"/></filter></defs>
<rect width="107" height="46" fill="url(#sky8)"/>
<g fill="#fff" filter="url(#b8)"><ellipse cx="5" cy="10" rx="9" ry="9"/><ellipse cx="14" cy="20" rx="10" ry="7"/><ellipse cx="20" cy="27" rx="13" ry="6"/><ellipse cx="30" cy="19" rx="9" ry="6"/><ellipse cx="29" cy="31" rx="7" ry="4"/><ellipse cx="45" cy="25" rx="9" ry="4.500"/><ellipse cx="4" cy="30" rx="7" ry="6"/><ellipse cx="28.500" cy="9.500" rx="2.500" ry="1.800"/><ellipse cx="85" cy="21" rx="9" ry="2" opacity=".55"/><ellipse cx="68" cy="31" rx="4" ry="3" opacity=".8"/><ellipse cx="56" cy="36" rx="6" ry="3.500" opacity=".6"/><ellipse cx="96" cy="6" rx="9" ry="3" opacity=".35"/><ellipse cx="12" cy="40" rx="14" ry="3" opacity=".5"/><ellipse cx="76" cy="38" rx="8" ry="3" opacity=".5"/></g>
<rect y="45" width="107" height="44" fill="url(#sea8)"/>
<g filter="url(#b8s)"><path d="M0 43.400h17v1.800H0z" fill="#4a4a48"/>
<path d="M41.700 43.600h65v3.800h-65z" fill="#6d6a62"/><path d="M42 42.500h38v1.600H42z" fill="#8a7f78"/>
<path d="M18.400 44h23.300v4.200H18.400z" fill="#4a4038"/>
<path d="M26 43.800l4.500-5.500q4-1.500 8 0 3-.5 4.500 1.500l2.500 4z" fill="#7b695a"/>
<rect x="26" y="43.500" width="11.500" height="4.600" fill="#ccd4d0"/>
<path d="M80 45.500h27v5.500q-14-.5-27-3z" fill="#8c9a98"/>
<path d="M80 43.500h27v2.300H80z" fill="#4f8f2e"/>
<path d="M80 32v12M88 33.500v11M97 31v13M103 32v12" stroke="#6a6a4a" stroke-width=".7"/>
<g fill="#3d7d3a"><ellipse cx="80" cy="31.500" rx="1.800" ry="1.400"/><ellipse cx="88" cy="33" rx="3.200" ry="2.200"/><ellipse cx="92" cy="36" rx="2.500" ry="2"/><ellipse cx="97" cy="33" rx="2.500" ry="2.500"/><ellipse cx="102" cy="31" rx="4" ry="3"/><ellipse cx="105" cy="35" rx="2.500" ry="3"/></g>
<path d="M94 41h10v3H94z" fill="#cfc7c0"/></g></svg></div>
<div class="pic" style="left:428px;top:366px;width:110px"><svg width="106" height="89" viewBox="0 0 107 89" preserveAspectRatio="none"><defs><linearGradient id="o9a" x1=".8" y1="0" x2=".1" y2="1"><stop offset="0" stop-color="#6e0808"/><stop offset=".4" stop-color="#c2181c"/><stop offset="1" stop-color="#cf4a78"/></linearGradient>
<linearGradient id="o9b" x1="0" y1="0" x2="0" y2="1"><stop offset="0" stop-color="#f9a512"/><stop offset=".45" stop-color="#ea5e0a"/><stop offset="1" stop-color="#df3a06"/></linearGradient>
<linearGradient id="o9c" x1="0" y1="0" x2="1" y2="0"><stop offset="0" stop-color="#f01a30"/><stop offset="1" stop-color="#8c1a2a"/></linearGradient>
<filter id="b9" x="-10%" y="-10%" width="120%" height="120%"><feGaussianBlur stdDeviation=".3"/></filter></defs>
<rect width="107" height="89" fill="#0ca5e3"/>
<g filter="url(#b9)"><path d="M39.200 35.100 50.400 29.300 53 30.100v4.500L45 37.500l-.2 11.100-5 2.400z" fill="url(#o9a)"/>
<path d="M43.600 52.200l1.200-.6H53v5.300l-2.600.8z" fill="url(#o9c)"/>
<path d="M53 29.900l8.500 2.900v21.700L53 57.200z" fill="url(#o9b)"/></g></svg></div>
<div class="pic" style="left:595px;top:366px;width:111px"><svg width="107" height="89" viewBox="0 0 107 89" preserveAspectRatio="none"><defs><filter id="b10" x="-20%" y="-20%" width="140%" height="140%"><feGaussianBlur stdDeviation="1.500"/></filter><filter id="b10s" x="-20%" y="-20%" width="140%" height="140%"><feGaussianBlur stdDeviation=".7"/></filter></defs>
<rect width="107" height="89" fill="#d8141c"/>
<g filter="url(#b10)" fill="none">
<path d="M-5 -4Q30 10 50 22t62 8" stroke="#7c0006" stroke-width="15"/>
<path d="M30 -6Q50 8 70 12t42 2" stroke="#ee2028" stroke-width="13"/>
<path d="M-5 14Q28 28 50 37t62 0" stroke="#8a0008" stroke-width="7"/>
<path d="M-5 26Q26 40 50 45t62-6" stroke="#f02830" stroke-width="6"/>
<path d="M-5 34Q26 48 52 52t60-4" stroke="#b80c14" stroke-width="5"/>
<path d="M46 58q30 2 66-6" stroke="#e62028" stroke-width="12"/>
<path d="M-5 46Q24 64 50 72t62-2" stroke="#860008" stroke-width="13"/>
<path d="M-5 60Q24 76 54 82t58-4" stroke="#e8222a" stroke-width="7"/>
<path d="M-5 76Q20 90 50 96" stroke="#900008" stroke-width="14"/>
<path d="M50 92q30 0 62-8" stroke="#d4161e" stroke-width="8"/>
</g>
<g filter="url(#b10s)" fill="none"><path d="M0 3Q30 16 52 27t55 9" stroke="#ff3a3a" stroke-width="1" opacity=".8"/><path d="M36 0Q56 10 78 11t29-2" stroke="#ff4040" stroke-width="2" opacity=".6"/><path d="M50 43q30 3 57-6" stroke="#ff3838" stroke-width="1" opacity=".7"/></g></svg></div>
<div class="lab" style="left:220px;top:217px">XX 摄</div>
<div class="lab" style="left:387px;top:217px"></div>
<div class="lab" style="left:555px;top:217px"></div>
<div class="lab" style="left:723px;top:217px"></div>
<div class="lab" style="left:220px;top:330px"></div>
<div class="lab" style="left:387px;top:330px"></div>
<div class="lab" style="left:555px;top:330px"></div>
<div class="lab" style="left:723px;top:330px"></div>
<div class="lab" style="left:387px;top:444px"></div>
<div class="lab" style="left:555px;top:444px"></div>
</div>
<svg class="ico" style="left:475px;top:368px" width="13" height="20" viewBox="0 0 13 20"><path d="M1 1v15.500l3.600-3.400 2.600 6 2.400-1-2.600-5.900h5z" fill="#fff" stroke="#000" stroke-width="1"/></svg>
<div class="abs" style="left:1460px;top:207px;width:13px;height:736px;background:#dadada"></div>
<div class="abs" style="left:1460px;top:192px;width:14px;height:15px;background:#fff;border:1px solid #ababab"></div>
<svg class="ico" style="left:1464px;top:198px" width="7" height="4" viewBox="0 0 7 4"><path d="M0 4L3.500 0 7 4z" fill="#777"/></svg>
<div class="abs" style="left:1460px;top:773px;width:14px;height:56px;background:#f3f3f3;border:1px solid #ababab"></div>
<div class="abs" style="left:1460px;top:943px;width:14px;height:15px;background:#fff;border:1px solid #ababab"></div>
<svg class="ico" style="left:1464px;top:949px" width="7" height="4" viewBox="0 0 7 4"><path d="M0 0h7L3.500 4z" fill="#777"/></svg>
<svg class="ico" style="left:1464px;top:962px" width="7" height="9" viewBox="0 0 7 9"><path d="M0 4L3.500 0 7 4zM0 9l3.500-4L7 9z" fill="#777"/></svg>
<svg class="ico" style="left:1464px;top:980px" width="7" height="9" viewBox="0 0 7 9"><path d="M0 0h7L3.500 4zM0 5h7L3.500 9z" fill="#777"/></svg>
<div class="abs" style="left:300px;top:1014px;width:1160px;height:1px;background:#c6c6c6"></div>
<div class="abs" style="left:1083px;top:925px;width:390px;height:91px;background:rgba(255,255,255,.62)"></div>
<div class="abs" style="left:1093px;top:927px;width:206px;height:46px;font-family:'Noto Serif CJK SC','Noto Sans CJK SC',serif;font-weight:900;font-size:39px;line-height:46px;color:#f5242c;-webkit-text-stroke:.9px #f5242c;white-space:nowrap;letter-spacing:1.600px">电脑技术网</div>
<div class="abs" style="left:1091px;top:976px;width:212px;height:40px;font-family:'Liberation Serif',serif;font-size:31px;line-height:40px;color:#2a70e2;-webkit-text-stroke:.5px #2a70e2;white-space:nowrap;letter-spacing:.300px">www.tagxp.com</div>
<div class="abs" style="left:1310px;top:924px;width:155px;height:93px;border-radius:20px;background:#2c7ef8;overflow:hidden">
<div class="abs" style="left:4px;top:52px;width:46px;height:30px;border-radius:50%;border:5px solid #4a92fa;opacity:.35;transform:rotate(-25deg)"></div>
<div class="abs" style="left:6px;top:-1px;width:160px;height:88px;font-family:'Liberation Sans',sans-serif;font-weight:bold;font-size:77.500px;line-height:88px;color:#fcfcfc;white-space:nowrap;transform:scaleX(.919);transform-origin:0 0;letter-spacing:-1px">TAG</div>
<div class="abs" style="left:47px;top:47px;font-size:21.500px;line-height:26px;font-weight:bold;color:#1f5fd8;opacity:.3;white-space:nowrap;letter-spacing:0">极光下载站</div>
<div class="abs" style="left:48px;top:72px;font-size:17.500px;line-height:18px;color:#1f5fd8;opacity:.3;white-space:nowrap">www.xz7.com</div>
</div>
<div class="abs" style="left:1340px;top:996px;width:60px;height:21px;border-radius:3px 3px 0 0;background:rgba(80,150,250,.5);box-shadow:0 1px 3px rgba(0,0,40,.25)"></div>
<div class="abs" style="left:1345px;top:997px;font-size:13px;line-height:14px;color:#2a62c8;white-space:nowrap;opacity:.85;letter-spacing:.5px">CH ♪ 简</div>

<div class="abs" style="left:0;top:1017px;width:1473px;height:5px;background:#f1f1f1;border-top:1px solid #c6c6c6;overflow:hidden">
<span class="abs" style="left:8px;top:3px;font-size:12px;line-height:14px;color:#444;white-space:nowrap">幻灯片 第 11 张，共 13 张</span>
<span class="abs" style="left:172px;top:3px;font-size:12px;line-height:14px;color:#444;white-space:nowrap">中文(中国)</span>
<span class="abs" style="left:1010px;top:3px;font-size:12px;line-height:14px;color:#444;white-space:nowrap">备注</span>
<span class="abs" style="left:1068px;top:3px;font-size:12px;line-height:14px;color:#444;white-space:nowrap">批注</span>
</div>

</body>
</html>
